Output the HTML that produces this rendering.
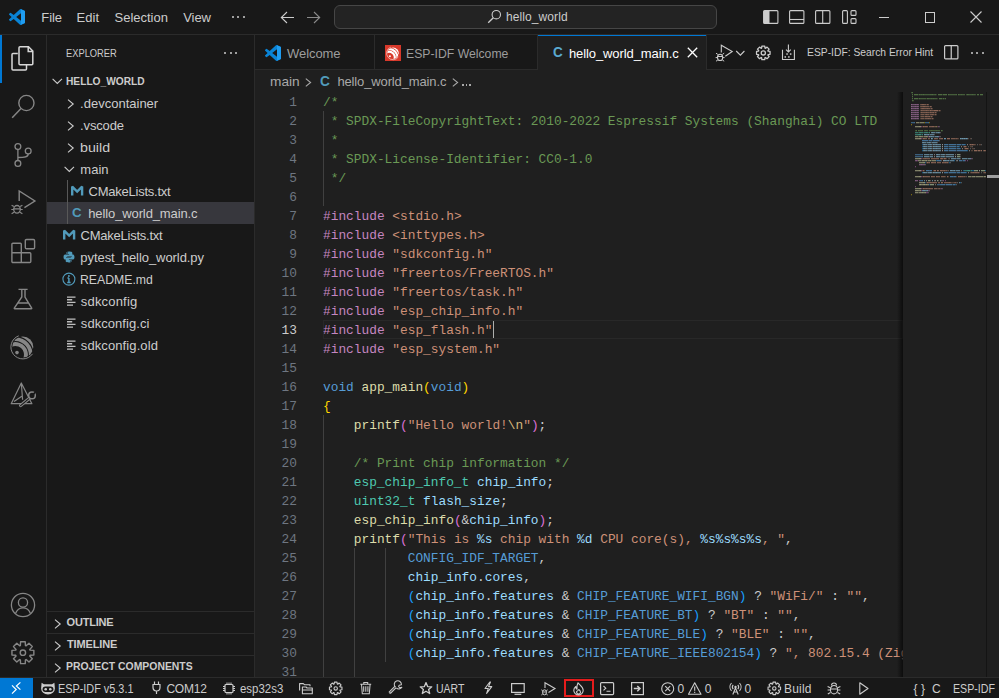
<!DOCTYPE html><html><head><meta charset="utf-8"><style>*{box-sizing:border-box;margin:0;padding:0}html,body{width:999px;height:698px;overflow:hidden;background:#181818;font-family:"Liberation Sans",sans-serif;color:#cccccc;position:relative}.a{position:absolute}.t{position:absolute;white-space:pre;line-height:1}svg{position:absolute;overflow:visible}.cl{position:absolute;left:0;height:19px;padding-top:1px;white-space:pre;font-family:"Liberation Mono",monospace;font-size:12.83px;line-height:19px;color:#cccccc}.ln{position:absolute;height:19px;width:60px;padding-top:1px;text-align:right;font-family:"Liberation Mono",monospace;font-size:12.83px;line-height:19px;color:#6e7681}</style></head><body><div class="a" style="left:0px;top:34px;width:999px;height:1px;background:#2b2b2b;"></div><svg style="left:9px;top:9px;" width="16" height="16" viewBox="0 0 100 100"><path fill="#0a84d6" d="M96.46 10.8L75.86.87a6.23 6.23 0 0 0-7.1 1.21L29.35 38.04 12.17 25.01a4.16 4.16 0 0 0-5.32.24L1.34 30.26a4.17 4.17 0 0 0 0 6.16L16.24 50 1.34 63.58a4.17 4.17 0 0 0 0 6.16l5.51 5.01a4.16 4.16 0 0 0 5.32.24l17.18-13.03 39.41 35.96a6.23 6.23 0 0 0 7.1 1.21l20.6-9.92A6.24 6.24 0 0 0 100 83.8V16.2a6.24 6.24 0 0 0-3.54-5.4zM75.02 72.7 45.11 50l29.91-22.7v45.4z"/><path fill="#1f9cf0" d="M75.86.87l20.6 9.93A6.24 6.24 0 0 1 100 16.2v67.6a6.24 6.24 0 0 1-3.54 5.4l-20.6 9.92A6.23 6.23 0 0 1 75 99.5V.5z"/></svg><div class="t" style="left:41.30px;top:11.30px;font-size:13px;color:#cccccc;font-weight:400;letter-spacing:-0.058px;">File</div><div class="t" style="left:76.50px;top:11.30px;font-size:13px;color:#cccccc;font-weight:400;letter-spacing:0.083px;">Edit</div><div class="t" style="left:114.58px;top:11.30px;font-size:13px;color:#cccccc;font-weight:400;letter-spacing:-0.025px;">Selection</div><div class="t" style="left:183.28px;top:11.30px;font-size:13px;color:#cccccc;font-weight:400;letter-spacing:-0.083px;">View</div><div class="a" style="left:231.6px;top:16px;width:2px;height:2px;background:#cccccc;border-radius:1px"></div><div class="a" style="left:237.1px;top:16px;width:2px;height:2px;background:#cccccc;border-radius:1px"></div><div class="a" style="left:242.6px;top:16px;width:2px;height:2px;background:#cccccc;border-radius:1px"></div><svg style="left:280px;top:11px;" width="15" height="13" viewBox="0 0 15 13"><path d="M7 1 L1.3 6.5 L7 12 M1.3 6.5 H14" stroke="#cccccc" stroke-width="1.1" fill="none"/></svg><svg style="left:306px;top:11px;" width="15" height="13" viewBox="0 0 15 13"><path d="M8 1 L13.7 6.5 L8 12 M13.7 6.5 H1" stroke="#8a8a8a" stroke-width="1.1" fill="none"/></svg><div class="a" style="left:334px;top:5px;width:383px;height:24px;border:1px solid #464646;border-radius:6px;background:#232323"></div><svg style="left:487px;top:9px;" width="15" height="15" viewBox="0 0 15 15"><circle cx="9.3" cy="5.7" r="4.2" stroke="#cccccc" stroke-width="1.1" fill="none"/><path d="M6.3 8.7 L1.2 13.8" stroke="#cccccc" stroke-width="1.3"/></svg><div class="t" style="left:506.12px;top:11.35px;font-size:12px;color:#cccccc;font-weight:400;letter-spacing:0.080px;">hello_world</div><svg style="left:763px;top:10px;" width="16" height="14" viewBox="0 0 16 14"><rect x="0.6" y="0.6" width="14.3" height="12.8" rx="1" stroke="#cccccc" stroke-width="1.1" fill="none"/><rect x="1" y="1" width="5.5" height="12" fill="#cccccc"/></svg><svg style="left:789px;top:10px;" width="16" height="14" viewBox="0 0 16 14"><rect x="0.6" y="0.6" width="14.3" height="12.8" rx="1" stroke="#cccccc" stroke-width="1.1" fill="none"/><path d="M1 9.5 H15" stroke="#cccccc" stroke-width="1.1"/></svg><svg style="left:815px;top:10px;" width="16" height="14" viewBox="0 0 16 14"><rect x="0.6" y="0.6" width="14.3" height="12.8" rx="1" stroke="#cccccc" stroke-width="1.1" fill="none"/><path d="M7.7 1 V13.5" stroke="#cccccc" stroke-width="1.1"/></svg><svg style="left:842px;top:10px;" width="15" height="14" viewBox="0 0 15 14"><rect x="0.6" y="0.6" width="4.8" height="12.8" rx="1" stroke="#cccccc" stroke-width="1.1" fill="none"/><rect x="9" y="0.6" width="5" height="4.8" rx="1" stroke="#cccccc" stroke-width="1.1" fill="none"/><rect x="9" y="8.6" width="5" height="4.8" rx="1" stroke="#cccccc" stroke-width="1.1" fill="none"/></svg><div class="a" style="left:879px;top:17px;width:10px;height:1px;background:#cccccc;"></div><div class="a" style="left:925px;top:12px;width:10px;height:11px;border:1px solid #cccccc"></div><svg style="left:970px;top:11px;" width="12" height="12" viewBox="0 0 12 12"><path d="M0.5 0.5 L11.5 11.5 M11.5 0.5 L0.5 11.5" stroke="#cccccc" stroke-width="1.1"/></svg><div class="a" style="left:46px;top:35px;width:1px;height:642px;background:#2b2b2b;"></div><div class="a" style="left:0px;top:35px;width:2px;height:48px;background:#0078d4;"></div><svg style="left:11px;top:46px;" width="23" height="25" viewBox="0 0 23 25"><path d="M6.8 7.5 H2 a1 1 0 0 0 -1 1 V23 a1 1 0 0 0 1 1 H14.5 a1 1 0 0 0 1 -1 V19" stroke="#d7d7d7" stroke-width="1.5" fill="none"/><path d="M8 1.8 a1 1 0 0 1 1 -1 H17.5 L21.8 5 V17.8 a1 1 0 0 1 -1 1 H9 a1 1 0 0 1 -1 -1 Z M17.2 1 V5.5 H21.8" stroke="#d7d7d7" stroke-width="1.5" fill="none"/></svg><svg style="left:11px;top:94px;" width="25" height="25" viewBox="0 0 25 25"><circle cx="15.4" cy="9" r="7.6" stroke="#868686" stroke-width="1.4" fill="none"/><path d="M10 14.5 L1.2 23.8" stroke="#868686" stroke-width="1.5"/></svg><svg style="left:11px;top:141px;" width="22" height="26" viewBox="0 0 22 26"><circle cx="6.9" cy="5.6" r="2.9" stroke="#868686" stroke-width="1.3" fill="none"/><circle cx="17.2" cy="10.1" r="2.9" stroke="#868686" stroke-width="1.3" fill="none"/><circle cx="6.9" cy="22.4" r="2.9" stroke="#868686" stroke-width="1.3" fill="none"/><path d="M6.9 8.5 V19.5 M17.2 13 C17.2 16 14 16.5 6.9 16.5" stroke="#868686" stroke-width="1.3" fill="none"/></svg><svg style="left:9px;top:189px;" width="28" height="26" viewBox="0 0 28 26"><path d="M10.2 12 V2 L25.9 12 L15.4 18.7" stroke="#868686" stroke-width="1.4" fill="none" stroke-linejoin="miter"/><ellipse cx="8" cy="20.3" rx="3.3" ry="3.8" stroke="#868686" stroke-width="1.3" fill="none"/><path d="M4.6 19.8 H11.4 M2.6 16.2 L4.9 17.6 M13.4 16.2 L11.1 17.6 M2.3 20.5 H4.6 M11.4 20.5 H13.7 M2.6 24.8 L5 23.3 M13.4 24.8 L11 23.3" stroke="#868686" stroke-width="1.2" fill="none"/></svg><svg style="left:10px;top:238px;" width="26" height="26" viewBox="0 0 26 26"><path d="M1.9 6.2 a1 1 0 0 1 1 -1 H10.3 a1 1 0 0 1 1 1 V14.7 H19.8 a1 1 0 0 1 1 1 V23.5 a1 1 0 0 1 -1 1 H2.9 a1 1 0 0 1 -1 -1 Z M1.9 14.7 H11.3 V24.5" stroke="#868686" stroke-width="1.4" fill="none"/><rect x="15.3" y="1.5" width="9.3" height="9.3" rx="1.2" stroke="#868686" stroke-width="1.4" fill="none"/></svg><svg style="left:10px;top:287px;" width="24" height="24" viewBox="0 0 24 24"><path d="M8.5 2.4 H17.6 M11.8 2.4 V10 L4.3 21.2 a0.4 0.4 0 0 0 0.4 0.6 H21.3 a0.4 0.4 0 0 0 0.4 -0.6 L15 10 V2.4 M7.7 16 H18.3" stroke="#868686" stroke-width="1.4" fill="none"/></svg><svg style="left:8px;top:332px" width="30" height="30" viewBox="0 0 30 30"><defs><clipPath id="clipA"><circle cx="14.8" cy="15" r="10.5"/></clipPath></defs><g clip-path="url(#clipA)"><path d="M-2.90 22.50 A10.4 10.4 0 1 1 15.47 29.18" stroke="#868686" stroke-width="3.9" fill="none"/><path d="M-6.78 17.30 A15.2 15.2 0 1 1 20.66 30.10" stroke="#868686" stroke-width="3.8" fill="none"/><path d="M-5.36 7.18 A20.0 20.0 0 0 1 26.29 29.34" stroke="#868686" stroke-width="3.4" fill="none"/></g><circle cx="9" cy="20.6" r="1.8" fill="#868686"/><path d="M24.55 21.83 A11.9 11.9 0 1 1 10.73 3.82" stroke="#868686" stroke-width="1" fill="none"/></svg><svg style="left:8px;top:378px;" width="30" height="32" viewBox="0 0 30 32"><path d="M13.3 5 L3.2 25.7 H23.9 Z M13.3 5 L14.6 21.8 M6 23.6 L13.8 18.2" stroke="#868686" stroke-width="1.2" fill="none" stroke-linejoin="round"/><path d="M12.6 27.6 L21.5 20.2" stroke="#868686" stroke-width="3.2" stroke-linecap="round"/><path d="M12.6 27.6 L21.5 20.2" stroke="#181818" stroke-width="1.1" stroke-linecap="round"/><circle cx="24" cy="17.4" r="3.3" stroke="#868686" stroke-width="1.5" fill="#181818"/><path d="M24.5 17 L27.5 14.2" stroke="#181818" stroke-width="1.8"/><path d="M21.5 20.2 L22 19.6" stroke="#868686" stroke-width="1.2"/></svg><svg style="left:10px;top:592px;" width="26" height="26" viewBox="0 0 26 26"><circle cx="13" cy="13" r="11.6" stroke="#868686" stroke-width="1.3" fill="none"/><circle cx="13" cy="10.5" r="4.6" stroke="#868686" stroke-width="1.3" fill="none"/><path d="M5.5 21.5 C7 17.5 9.5 15.8 13 15.8 C16.5 15.8 19 17.5 20.5 21.5" stroke="#868686" stroke-width="1.3" fill="none"/></svg><svg style="left:0;top:0" width="999" height="698" viewBox="0 0 999 698"><path d="M30.06 650.17 L33.85 650.37 L33.85 655.03 L30.06 655.23 L29.76 655.97 L32.30 658.79 L28.99 662.10 L26.17 659.56 L25.43 659.86 L25.23 663.65 L20.57 663.65 L20.37 659.86 L19.63 659.56 L16.81 662.10 L13.50 658.79 L16.04 655.97 L15.74 655.23 L11.95 655.03 L11.95 650.37 L15.74 650.17 L16.04 649.43 L13.50 646.61 L16.81 643.30 L19.63 645.84 L20.37 645.54 L20.57 641.75 L25.23 641.75 L25.43 645.54 L26.17 645.84 L28.99 643.30 L32.30 646.61 L29.76 649.43Z" stroke="#868686" stroke-width="1.4" fill="none" stroke-linejoin="round"/><circle cx="22.9" cy="652.7" r="2.7" stroke="#868686" stroke-width="1.4" fill="none"/></svg><div class="a" style="left:254px;top:35px;width:1px;height:642px;background:#2b2b2b;"></div><div class="t" style="left:66.26px;top:48.09px;font-size:11px;color:#cccccc;font-weight:400;transform:scaleX(0.8479);transform-origin:0 0;">EXPLORER</div><div class="a" style="left:224.4px;top:52px;width:2px;height:2px;background:#cccccc;border-radius:1px"></div><div class="a" style="left:229.7px;top:52px;width:2px;height:2px;background:#cccccc;border-radius:1px"></div><div class="a" style="left:235.0px;top:52px;width:2px;height:2px;background:#cccccc;border-radius:1px"></div><svg style="left:52px;top:78.4px;" width="11" height="7" viewBox="0 0 11 7"><path d="M0.6 0.8 L5.3 5.5 L10 0.8" stroke="#cccccc" stroke-width="1.1" fill="none"/></svg><div class="t" style="left:66.31px;top:75.89px;font-size:11px;color:#cccccc;font-weight:700;transform:scaleX(0.9266);transform-origin:0 0;">HELLO_WORLD</div><div class="t" style="left:80.08px;top:96.80px;font-size:13px;color:#cccccc;font-weight:400;letter-spacing:0.004px;">.devcontainer</div><svg style="left:66.6px;top:99.1px;" width="8" height="10" viewBox="0 0 8 10"><path d="M1 0.7 L6.2 5 L1 9.3" stroke="#cccccc" stroke-width="1.1" fill="none"/></svg><div class="t" style="left:80.08px;top:118.80px;font-size:13px;color:#cccccc;font-weight:400;letter-spacing:-0.154px;">.vscode</div><svg style="left:66.6px;top:121.1px;" width="8" height="10" viewBox="0 0 8 10"><path d="M1 0.7 L6.2 5 L1 9.3" stroke="#cccccc" stroke-width="1.1" fill="none"/></svg><div class="t" style="left:80.24px;top:140.80px;font-size:13px;color:#cccccc;font-weight:400;transform:scaleX(1.0951);transform-origin:0 0;">build</div><svg style="left:66.6px;top:143.1px;" width="8" height="10" viewBox="0 0 8 10"><path d="M1 0.7 L6.2 5 L1 9.3" stroke="#cccccc" stroke-width="1.1" fill="none"/></svg><div class="t" style="left:80.33px;top:162.80px;font-size:13px;color:#cccccc;font-weight:400;letter-spacing:0.000px;">main</div><svg style="left:64.4px;top:166.3px;" width="11" height="7" viewBox="0 0 11 7"><path d="M0.6 0.8 L5.3 5.5 L10 0.8" stroke="#cccccc" stroke-width="1.1" fill="none"/></svg><div class="t" style="left:88.47px;top:184.80px;font-size:13px;color:#cccccc;font-weight:400;letter-spacing:-0.231px;">CMakeLists.txt</div><svg style="left:70.8px;top:185.4px;" width="12.3" height="10.6" viewBox="0 0 12.3 10.6"><path d="M1.2 10.6 V1.6 L6.15 6.6 L11.1 1.6 V10.6" stroke="#519aba" stroke-width="2.4" fill="none" stroke-linejoin="miter" stroke-miterlimit="2"/></svg><div class="a" style="left:47px;top:202px;width:207px;height:22px;background:#37373d;"></div><div class="t" style="left:88.22px;top:206.80px;font-size:13px;color:#cccccc;font-weight:400;letter-spacing:-0.112px;">hello_world_main.c</div><div class="t" style="left:72.11px;top:205.76px;font-size:13.64px;color:#519aba;font-weight:700;transform:scaleX(0.978);transform-origin:0 0">C</div><div class="t" style="left:80.58px;top:228.80px;font-size:13px;color:#cccccc;font-weight:400;letter-spacing:-0.238px;">CMakeLists.txt</div><svg style="left:62.7px;top:229.4px;" width="12.3" height="10.6" viewBox="0 0 12.3 10.6"><path d="M1.2 10.6 V1.6 L6.15 6.6 L11.1 1.6 V10.6" stroke="#519aba" stroke-width="2.4" fill="none" stroke-linejoin="miter" stroke-miterlimit="2"/></svg><div class="t" style="left:80.33px;top:250.80px;font-size:13px;color:#cccccc;font-weight:400;letter-spacing:-0.066px;">pytest_hello_world.py</div><svg style="left:62.9px;top:251.2px;" width="12" height="12" viewBox="0 0 12 12"><path d="M6 0.5 C3.3 0.5 3.5 1.7 3.5 1.7 V3 H6.1 V3.5 H2.4 C2.4 3.5 0.5 3.3 0.5 6 C0.5 8.8 2.2 8.6 2.2 8.6 H3.2 V7.3 C3.2 7.3 3.1 5.6 4.9 5.6 H7.6 C7.6 5.6 9.3 5.7 9.3 4 V1.9 C9.3 1.9 9.6 0.5 6 0.5 Z" fill="#519aba"/><path d="M6 0.5 C3.3 0.5 3.5 1.7 3.5 1.7 V3 H6.1 V3.5 H2.4 C2.4 3.5 0.5 3.3 0.5 6 C0.5 8.8 2.2 8.6 2.2 8.6 H3.2 V7.3 C3.2 7.3 3.1 5.6 4.9 5.6 H7.6 C7.6 5.6 9.3 5.7 9.3 4 V1.9 C9.3 1.9 9.6 0.5 6 0.5 Z" fill="#519aba" transform="rotate(180 6 6)"/><circle cx="4.6" cy="1.9" r="0.55" fill="#181818"/><circle cx="7.4" cy="10.1" r="0.55" fill="#181818"/></svg><div class="t" style="left:80.26px;top:272.80px;font-size:13px;color:#cccccc;font-weight:400;transform:scaleX(0.9430);transform-origin:0 0;">README.md</div><svg style="left:62px;top:272.8px;" width="14" height="13" viewBox="0 0 14 13"><circle cx="6.9" cy="6.1" r="6" stroke="#519aba" stroke-width="1.1" fill="none"/><path d="M6.9 5 V9.4 M5.2 9.4 H8.6 M5.4 5 H7" stroke="#519aba" stroke-width="1.5"/><circle cx="6.9" cy="3.1" r="1" fill="#519aba"/></svg><div class="t" style="left:80.83px;top:294.80px;font-size:13px;color:#cccccc;font-weight:400;letter-spacing:0.181px;">sdkconfig</div><svg style="left:66px;top:296px;" width="11" height="11" viewBox="0 0 11 11"><path d="M1 1.1 H9.5 M1 3.75 H6.2 M1 6.45 H9.5 M1 9.15 H7" stroke="#c0c0c0" stroke-width="1.3"/></svg><div class="t" style="left:80.83px;top:316.80px;font-size:13px;color:#cccccc;font-weight:400;letter-spacing:0.052px;">sdkconfig.ci</div><svg style="left:66px;top:318px;" width="11" height="11" viewBox="0 0 11 11"><path d="M1 1.1 H9.5 M1 3.75 H6.2 M1 6.45 H9.5 M1 9.15 H7" stroke="#c0c0c0" stroke-width="1.3"/></svg><div class="t" style="left:80.83px;top:338.80px;font-size:13px;color:#cccccc;font-weight:400;letter-spacing:0.098px;">sdkconfig.old</div><svg style="left:66px;top:340px;" width="11" height="11" viewBox="0 0 11 11"><path d="M1 1.1 H9.5 M1 3.75 H6.2 M1 6.45 H9.5 M1 9.15 H7" stroke="#c0c0c0" stroke-width="1.3"/></svg><div class="a" style="left:67px;top:180px;width:1px;height:44px;background:#585858;"></div><div class="a" style="left:47px;top:611px;width:207px;height:1px;background:#2b2b2b;"></div><svg style="left:53.8px;top:618.6px;" width="8" height="10" viewBox="0 0 8 10"><path d="M1 0.7 L6.2 5 L1 9.3" stroke="#cccccc" stroke-width="1.1" fill="none"/></svg><div class="t" style="left:66.50px;top:616.89px;font-size:11px;color:#cccccc;font-weight:700;letter-spacing:-0.179px;">OUTLINE</div><div class="a" style="left:47px;top:633px;width:207px;height:1px;background:#2b2b2b;"></div><svg style="left:53.8px;top:640.6px;" width="8" height="10" viewBox="0 0 8 10"><path d="M1 0.7 L6.2 5 L1 9.3" stroke="#cccccc" stroke-width="1.1" fill="none"/></svg><div class="t" style="left:66.88px;top:638.89px;font-size:11px;color:#cccccc;font-weight:700;letter-spacing:-0.107px;">TIMELINE</div><div class="a" style="left:47px;top:655px;width:207px;height:1px;background:#2b2b2b;"></div><svg style="left:53.8px;top:662.6px;" width="8" height="10" viewBox="0 0 8 10"><path d="M1 0.7 L6.2 5 L1 9.3" stroke="#cccccc" stroke-width="1.1" fill="none"/></svg><div class="t" style="left:66.29px;top:660.89px;font-size:11px;color:#cccccc;font-weight:700;transform:scaleX(0.9463);transform-origin:0 0;">PROJECT COMPONENTS</div><div class="a" style="left:255px;top:70px;width:744px;height:607px;background:#1f1f1f;"></div><div class="a" style="left:255px;top:69px;width:744px;height:1px;background:#2b2b2b;"></div><div class="a" style="left:374px;top:35px;width:1px;height:34px;background:#2b2b2b;"></div><div class="a" style="left:537px;top:35px;width:1px;height:34px;background:#2b2b2b;"></div><div class="a" style="left:706px;top:35px;width:1px;height:34px;background:#2b2b2b;"></div><div class="a" style="left:538px;top:35px;width:168px;height:35px;background:#1f1f1f;"></div><div class="a" style="left:538px;top:35px;width:168px;height:1px;background:#0078d4;"></div><svg style="left:265px;top:45px;" width="16" height="16" viewBox="0 0 100 100"><path fill="#0a84d6" d="M96.46 10.8L75.86.87a6.23 6.23 0 0 0-7.1 1.21L29.35 38.04 12.17 25.01a4.16 4.16 0 0 0-5.32.24L1.34 30.26a4.17 4.17 0 0 0 0 6.16L16.24 50 1.34 63.58a4.17 4.17 0 0 0 0 6.16l5.51 5.01a4.16 4.16 0 0 0 5.32.24l17.18-13.03 39.41 35.96a6.23 6.23 0 0 0 7.1 1.21l20.6-9.92A6.24 6.24 0 0 0 100 83.8V16.2a6.24 6.24 0 0 0-3.54-5.4zM75.02 72.7 45.11 50l29.91-22.7v45.4z"/><path fill="#1f9cf0" d="M75.86.87l20.6 9.93A6.24 6.24 0 0 1 100 16.2v67.6a6.24 6.24 0 0 1-3.54 5.4l-20.6 9.92A6.23 6.23 0 0 1 75 99.5V.5z"/></svg><div class="t" style="left:287.00px;top:46.90px;font-size:13px;color:#9d9d9d;font-weight:400;letter-spacing:-0.062px;">Welcome</div><div class="a" style="left:385px;top:45px;width:16px;height:16px;background:#d8392b;"></div><svg style="left:384.7px;top:45.1px" width="16.4" height="16.4" viewBox="0 0 30 30"><defs><clipPath id="clipB"><circle cx="14.8" cy="15" r="10.5"/></clipPath></defs><g clip-path="url(#clipB)"><path d="M-2.90 22.50 A10.4 10.4 0 1 1 15.47 29.18" stroke="#ffffff" stroke-width="3.9" fill="none"/><path d="M-6.78 17.30 A15.2 15.2 0 1 1 20.66 30.10" stroke="#ffffff" stroke-width="3.8" fill="none"/><path d="M-5.36 7.18 A20.0 20.0 0 0 1 26.29 29.34" stroke="#ffffff" stroke-width="3.4" fill="none"/></g><circle cx="9" cy="20.6" r="1.8" fill="#ffffff"/><path d="M24.55 21.83 A11.9 11.9 0 1 1 10.73 3.82" stroke="#ffffff" stroke-width="1" fill="none"/></svg><div class="t" style="left:406.36px;top:46.90px;font-size:13px;color:#9d9d9d;font-weight:400;transform:scaleX(0.9408);transform-origin:0 0;">ESP-IDF Welcome</div><div class="t" style="left:552.63px;top:44.60px;font-size:14.78px;color:#5aaad0;font-weight:700;transform:scaleX(0.914);transform-origin:0 0">C</div><div class="t" style="left:568.92px;top:46.90px;font-size:13px;color:#ffffff;font-weight:400;letter-spacing:-0.088px;">hello_world_main.c</div><svg style="left:687px;top:47px;" width="11" height="11" viewBox="0 0 11 11"><path d="M0.8 0.8 L10.2 10.2 M10.2 0.8 L0.8 10.2" stroke="#ffffff" stroke-width="1.3"/></svg><svg style="left:710px;top:38px;" width="90" height="30" viewBox="710 38 90 30"><path d="M721.3 52.4 V45.2 L732.2 51.5 L725.3 56.3" stroke="#cccccc" stroke-width="1.1" fill="none"/><ellipse cx="720.1" cy="57.4" rx="2.6" ry="3.1" stroke="#cccccc" stroke-width="1.1" fill="none"/><path d="M717.5 56.5 H722.7 M716 53.2 L717.8 54.4 M724.2 53.2 L722.4 54.4 M715.6 57.6 H717.5 M722.7 57.6 H724.6 M716 61.2 L717.8 60 M724.2 61.2 L722.4 60" stroke="#cccccc" stroke-width="1" fill="none"/><path d="M736.2 51 L740.4 55.1 L744.4 51" stroke="#cccccc" stroke-width="1.1" fill="none"/><path d="M782.5 49.7 V59.5 H794.4 V49.7 M788.4 44.5 V51.8 M786 49.6 L788.4 52 L790.8 49.6" stroke="#cccccc" stroke-width="1.1" fill="none"/><g fill="#cccccc"><rect x="786.3" y="53.3" width="1.5" height="1.5"/><rect x="789.9" y="53.3" width="1.5" height="1.5"/><rect x="784.5" y="56.2" width="1.5" height="1.5"/><rect x="788.1" y="56.2" width="1.5" height="1.5"/></g></svg><svg style="left:0;top:0" width="999" height="698" viewBox="0 0 999 698"><path d="M768.11 51.20 L770.05 51.46 L770.05 54.34 L768.11 54.60 L767.90 55.10 L769.09 56.65 L767.05 58.69 L765.50 57.50 L765.00 57.71 L764.74 59.65 L761.86 59.65 L761.60 57.71 L761.10 57.50 L759.55 58.69 L757.51 56.65 L758.70 55.10 L758.49 54.60 L756.55 54.34 L756.55 51.46 L758.49 51.20 L758.70 50.70 L757.51 49.15 L759.55 47.11 L761.10 48.30 L761.60 48.09 L761.86 46.15 L764.74 46.15 L765.00 48.09 L765.50 48.30 L767.05 47.11 L769.09 49.15 L767.90 50.70Z" stroke="#cccccc" stroke-width="1.3" fill="none" stroke-linejoin="round"/><circle cx="763.3" cy="52.9" r="2.1" stroke="#cccccc" stroke-width="1.3" fill="none"/></svg><div class="t" style="left:806.92px;top:47.07px;font-size:11.5px;color:#cccccc;font-weight:400;transform:scaleX(0.8967);transform-origin:0 0;">ESP-IDF: Search Error Hint</div><svg style="left:944px;top:45px;" width="15" height="15" viewBox="0 0 15 15"><rect x="0.6" y="0.6" width="13.3" height="13.3" rx="1" stroke="#cccccc" stroke-width="1.2" fill="none"/><path d="M7.25 1 V14" stroke="#cccccc" stroke-width="1.2"/></svg><div class="a" style="left:971.0px;top:52px;width:2px;height:2px;background:#cccccc;border-radius:1px"></div><div class="a" style="left:976.3px;top:52px;width:2px;height:2px;background:#cccccc;border-radius:1px"></div><div class="a" style="left:981.6px;top:52px;width:2px;height:2px;background:#cccccc;border-radius:1px"></div><div class="t" style="left:270.28px;top:74.90px;font-size:13px;color:#a9a9a9;font-weight:400;transform:scaleX(1.0528);transform-origin:0 0;">main</div><svg style="left:304.5px;top:77.6px;" width="7" height="9" viewBox="0 0 7 9"><path d="M0.8 0.6 L5.6 4.5 L0.8 8.4" stroke="#a9a9a9" stroke-width="1.1" fill="none"/></svg><div class="t" style="left:320.29px;top:74.20px;font-size:14.07px;color:#519aba;font-weight:700;transform:scaleX(0.975);transform-origin:0 0">C</div><div class="t" style="left:337.43px;top:74.90px;font-size:13px;color:#a9a9a9;font-weight:400;letter-spacing:-0.135px;">hello_world_main.c</div><svg style="left:451.6px;top:77.6px;" width="7" height="9" viewBox="0 0 7 9"><path d="M0.8 0.6 L5.6 4.5 L0.8 8.4" stroke="#a9a9a9" stroke-width="1.1" fill="none"/></svg><div class="a" style="left:462.0px;top:84px;width:1.6px;height:1.6px;background:#a9a9a9;"></div><div class="a" style="left:465.5px;top:84px;width:1.6px;height:1.6px;background:#a9a9a9;"></div><div class="a" style="left:469.0px;top:84px;width:1.6px;height:1.6px;background:#a9a9a9;"></div><div class="a" style="left:323px;top:111px;width:1px;height:95px;background:#404040;"></div><div class="a" style="left:323px;top:415px;width:1px;height:262px;background:#404040;"></div><div class="a" style="left:354px;top:548px;width:1px;height:129px;background:#404040;"></div><div class="a" style="left:385px;top:548px;width:1px;height:114px;background:#404040;"></div><div class="a" style="left:323px;top:320px;width:580px;height:19px;background:transparent;border:1px solid #282828"></div><div class="a" style="left:323px;top:92px;width:580px;height:585px;overflow:hidden"><div class="cl" style="top:0px"><span style="color:#6a9955">/*</span></div><div class="cl" style="top:19px"><span style="color:#6a9955"> * SPDX-FileCopyrightText: 2010-2022 Espressif Systems (Shanghai) CO LTD</span></div><div class="cl" style="top:38px"><span style="color:#6a9955"> *</span></div><div class="cl" style="top:57px"><span style="color:#6a9955"> * SPDX-License-Identifier: CC0-1.0</span></div><div class="cl" style="top:76px"><span style="color:#6a9955"> */</span></div><div class="cl" style="top:95px"></div><div class="cl" style="top:114px"><span style="color:#c586c0">#include</span><span style="color:#cccccc"> </span><span style="color:#ce9178">&lt;stdio.h&gt;</span></div><div class="cl" style="top:133px"><span style="color:#c586c0">#include</span><span style="color:#cccccc"> </span><span style="color:#ce9178">&lt;inttypes.h&gt;</span></div><div class="cl" style="top:152px"><span style="color:#c586c0">#include</span><span style="color:#cccccc"> </span><span style="color:#ce9178">"sdkconfig.h"</span></div><div class="cl" style="top:171px"><span style="color:#c586c0">#include</span><span style="color:#cccccc"> </span><span style="color:#ce9178">"freertos/FreeRTOS.h"</span></div><div class="cl" style="top:190px"><span style="color:#c586c0">#include</span><span style="color:#cccccc"> </span><span style="color:#ce9178">"freertos/task.h"</span></div><div class="cl" style="top:209px"><span style="color:#c586c0">#include</span><span style="color:#cccccc"> </span><span style="color:#ce9178">"esp_chip_info.h"</span></div><div class="cl" style="top:228px"><span style="color:#c586c0">#include</span><span style="color:#cccccc"> </span><span style="color:#ce9178">"esp_flash.h"</span></div><div class="cl" style="top:247px"><span style="color:#c586c0">#include</span><span style="color:#cccccc"> </span><span style="color:#ce9178">"esp_system.h"</span></div><div class="cl" style="top:266px"></div><div class="cl" style="top:285px"><span style="color:#569cd6">void</span><span style="color:#cccccc"> </span><span style="color:#dcdcaa">app_main</span><span style="color:#ffd700">(</span><span style="color:#569cd6">void</span><span style="color:#ffd700">)</span></div><div class="cl" style="top:304px"><span style="color:#ffd700">{</span></div><div class="cl" style="top:323px"><span style="color:#cccccc">    </span><span style="color:#dcdcaa">printf</span><span style="color:#da70d6">(</span><span style="color:#ce9178">"Hello world!</span><span style="color:#d7ba7d">\n</span><span style="color:#ce9178">"</span><span style="color:#da70d6">)</span><span style="color:#cccccc">;</span></div><div class="cl" style="top:342px"></div><div class="cl" style="top:361px"><span style="color:#cccccc">    </span><span style="color:#6a9955">/* Print chip information */</span></div><div class="cl" style="top:380px"><span style="color:#cccccc">    </span><span style="color:#4ec9b0">esp_chip_info_t</span><span style="color:#cccccc"> </span><span style="color:#9cdcfe">chip_info</span><span style="color:#cccccc">;</span></div><div class="cl" style="top:399px"><span style="color:#cccccc">    </span><span style="color:#4ec9b0">uint32_t</span><span style="color:#cccccc"> </span><span style="color:#9cdcfe">flash_size</span><span style="color:#cccccc">;</span></div><div class="cl" style="top:418px"><span style="color:#cccccc">    </span><span style="color:#dcdcaa">esp_chip_info</span><span style="color:#da70d6">(</span><span style="color:#cccccc">&amp;</span><span style="color:#9cdcfe">chip_info</span><span style="color:#da70d6">)</span><span style="color:#cccccc">;</span></div><div class="cl" style="top:437px"><span style="color:#cccccc">    </span><span style="color:#dcdcaa">printf</span><span style="color:#da70d6">(</span><span style="color:#ce9178">"This is </span><span style="color:#9cdcfe">%s</span><span style="color:#ce9178"> chip with </span><span style="color:#9cdcfe">%d</span><span style="color:#ce9178"> CPU core(s), </span><span style="color:#9cdcfe">%s%s%s%s</span><span style="color:#ce9178">, "</span><span style="color:#cccccc">,</span></div><div class="cl" style="top:456px"><span style="color:#cccccc">           </span><span style="color:#569cd6">CONFIG_IDF_TARGET</span><span style="color:#cccccc">,</span></div><div class="cl" style="top:475px"><span style="color:#cccccc">           </span><span style="color:#9cdcfe">chip_info</span><span style="color:#cccccc">.</span><span style="color:#9cdcfe">cores</span><span style="color:#cccccc">,</span></div><div class="cl" style="top:494px"><span style="color:#cccccc">           </span><span style="color:#179fff">(</span><span style="color:#9cdcfe">chip_info</span><span style="color:#cccccc">.</span><span style="color:#9cdcfe">features</span><span style="color:#cccccc"> &amp; </span><span style="color:#569cd6">CHIP_FEATURE_WIFI_BGN</span><span style="color:#179fff">)</span><span style="color:#cccccc"> ? </span><span style="color:#ce9178">"WiFi/"</span><span style="color:#cccccc"> : </span><span style="color:#ce9178">""</span><span style="color:#cccccc">,</span></div><div class="cl" style="top:513px"><span style="color:#cccccc">           </span><span style="color:#179fff">(</span><span style="color:#9cdcfe">chip_info</span><span style="color:#cccccc">.</span><span style="color:#9cdcfe">features</span><span style="color:#cccccc"> &amp; </span><span style="color:#569cd6">CHIP_FEATURE_BT</span><span style="color:#179fff">)</span><span style="color:#cccccc"> ? </span><span style="color:#ce9178">"BT"</span><span style="color:#cccccc"> : </span><span style="color:#ce9178">""</span><span style="color:#cccccc">,</span></div><div class="cl" style="top:532px"><span style="color:#cccccc">           </span><span style="color:#179fff">(</span><span style="color:#9cdcfe">chip_info</span><span style="color:#cccccc">.</span><span style="color:#9cdcfe">features</span><span style="color:#cccccc"> &amp; </span><span style="color:#569cd6">CHIP_FEATURE_BLE</span><span style="color:#179fff">)</span><span style="color:#cccccc"> ? </span><span style="color:#ce9178">"BLE"</span><span style="color:#cccccc"> : </span><span style="color:#ce9178">""</span><span style="color:#cccccc">,</span></div><div class="cl" style="top:551px"><span style="color:#cccccc">           </span><span style="color:#179fff">(</span><span style="color:#9cdcfe">chip_info</span><span style="color:#cccccc">.</span><span style="color:#9cdcfe">features</span><span style="color:#cccccc"> &amp; </span><span style="color:#569cd6">CHIP_FEATURE_IEEE802154</span><span style="color:#179fff">)</span><span style="color:#cccccc"> ? </span><span style="color:#ce9178">", 802.15.4 (Zigbee/Thread)"</span><span style="color:#cccccc"> : </span><span style="color:#ce9178">""</span><span style="color:#da70d6">)</span><span style="color:#cccccc">;</span></div><div class="cl" style="top:570px"></div></div><div class="a" style="left:492.9px;top:321px;width:1.5px;height:17px;background:#aeafad;"></div><div class="ln" style="left:237px;top:92px;color:#6e7681">1</div><div class="ln" style="left:237px;top:111px;color:#6e7681">2</div><div class="ln" style="left:237px;top:130px;color:#6e7681">3</div><div class="ln" style="left:237px;top:149px;color:#6e7681">4</div><div class="ln" style="left:237px;top:168px;color:#6e7681">5</div><div class="ln" style="left:237px;top:187px;color:#6e7681">6</div><div class="ln" style="left:237px;top:206px;color:#6e7681">7</div><div class="ln" style="left:237px;top:225px;color:#6e7681">8</div><div class="ln" style="left:237px;top:244px;color:#6e7681">9</div><div class="ln" style="left:237px;top:263px;color:#6e7681">10</div><div class="ln" style="left:237px;top:282px;color:#6e7681">11</div><div class="ln" style="left:237px;top:301px;color:#6e7681">12</div><div class="ln" style="left:237px;top:320px;color:#cccccc">13</div><div class="ln" style="left:237px;top:339px;color:#6e7681">14</div><div class="ln" style="left:237px;top:358px;color:#6e7681">15</div><div class="ln" style="left:237px;top:377px;color:#6e7681">16</div><div class="ln" style="left:237px;top:396px;color:#6e7681">17</div><div class="ln" style="left:237px;top:415px;color:#6e7681">18</div><div class="ln" style="left:237px;top:434px;color:#6e7681">19</div><div class="ln" style="left:237px;top:453px;color:#6e7681">20</div><div class="ln" style="left:237px;top:472px;color:#6e7681">21</div><div class="ln" style="left:237px;top:491px;color:#6e7681">22</div><div class="ln" style="left:237px;top:510px;color:#6e7681">23</div><div class="ln" style="left:237px;top:529px;color:#6e7681">24</div><div class="ln" style="left:237px;top:548px;color:#6e7681">25</div><div class="ln" style="left:237px;top:567px;color:#6e7681">26</div><div class="ln" style="left:237px;top:586px;color:#6e7681">27</div><div class="ln" style="left:237px;top:605px;color:#6e7681">28</div><div class="ln" style="left:237px;top:624px;color:#6e7681">29</div><div class="ln" style="left:237px;top:643px;color:#6e7681">30</div><div class="ln" style="left:237px;top:662px;color:#6e7681">31</div><div class="a" style="left:897px;top:92px;width:6px;height:585px;background:linear-gradient(to right,rgba(0,0,0,0),rgba(0,0,0,0.6))"></div><svg style="left:0;top:0" width="999" height="698" viewBox="0 0 999 698"><rect x="911" y="92" width="1" height="1.3" fill="#6a9955" fill-opacity="0.42"/><rect x="912" y="92" width="1" height="1.3" fill="#6a9955" fill-opacity="0.64"/><rect x="912" y="94" width="1" height="1.3" fill="#6a9955" fill-opacity="0.64"/><rect x="914" y="94" width="1" height="1.3" fill="#6a9955" fill-opacity="0.64"/><rect x="915" y="94" width="1" height="1.3" fill="#6a9955" fill-opacity="0.64"/><rect x="916" y="94" width="1" height="1.3" fill="#6a9955" fill-opacity="0.64"/><rect x="917" y="94" width="1" height="1.3" fill="#6a9955" fill-opacity="0.64"/><rect x="918" y="94" width="1" height="1.3" fill="#6a9955" fill-opacity="0.30"/><rect x="919" y="94" width="1" height="1.3" fill="#6a9955" fill-opacity="0.64"/><rect x="920" y="94" width="1" height="1.3" fill="#6a9955" fill-opacity="0.51"/><rect x="921" y="94" width="1" height="1.3" fill="#6a9955" fill-opacity="0.59"/><rect x="922" y="94" width="1" height="1.3" fill="#6a9955" fill-opacity="0.51"/><rect x="923" y="94" width="1" height="1.3" fill="#6a9955" fill-opacity="0.64"/><rect x="924" y="94" width="1" height="1.3" fill="#6a9955" fill-opacity="0.51"/><rect x="925" y="94" width="1" height="1.3" fill="#6a9955" fill-opacity="0.51"/><rect x="926" y="94" width="1" height="1.3" fill="#6a9955" fill-opacity="0.51"/><rect x="927" y="94" width="1" height="1.3" fill="#6a9955" fill-opacity="0.51"/><rect x="928" y="94" width="1" height="1.3" fill="#6a9955" fill-opacity="0.51"/><rect x="929" y="94" width="1" height="1.3" fill="#6a9955" fill-opacity="0.51"/><rect x="930" y="94" width="1" height="1.3" fill="#6a9955" fill-opacity="0.59"/><rect x="931" y="94" width="1" height="1.3" fill="#6a9955" fill-opacity="0.59"/><rect x="932" y="94" width="1" height="1.3" fill="#6a9955" fill-opacity="0.64"/><rect x="933" y="94" width="1" height="1.3" fill="#6a9955" fill-opacity="0.51"/><rect x="934" y="94" width="1" height="1.3" fill="#6a9955" fill-opacity="0.51"/><rect x="935" y="94" width="1" height="1.3" fill="#6a9955" fill-opacity="0.59"/><rect x="936" y="94" width="1" height="1.3" fill="#6a9955" fill-opacity="0.30"/><rect x="938" y="94" width="1" height="1.3" fill="#6a9955" fill-opacity="0.64"/><rect x="939" y="94" width="1" height="1.3" fill="#6a9955" fill-opacity="0.64"/><rect x="940" y="94" width="1" height="1.3" fill="#6a9955" fill-opacity="0.64"/><rect x="941" y="94" width="1" height="1.3" fill="#6a9955" fill-opacity="0.64"/><rect x="942" y="94" width="1" height="1.3" fill="#6a9955" fill-opacity="0.30"/><rect x="943" y="94" width="1" height="1.3" fill="#6a9955" fill-opacity="0.64"/><rect x="944" y="94" width="1" height="1.3" fill="#6a9955" fill-opacity="0.64"/><rect x="945" y="94" width="1" height="1.3" fill="#6a9955" fill-opacity="0.64"/><rect x="946" y="94" width="1" height="1.3" fill="#6a9955" fill-opacity="0.64"/><rect x="948" y="94" width="1" height="1.3" fill="#6a9955" fill-opacity="0.64"/><rect x="949" y="94" width="1" height="1.3" fill="#6a9955" fill-opacity="0.51"/><rect x="950" y="94" width="1" height="1.3" fill="#6a9955" fill-opacity="0.51"/><rect x="951" y="94" width="1" height="1.3" fill="#6a9955" fill-opacity="0.51"/><rect x="952" y="94" width="1" height="1.3" fill="#6a9955" fill-opacity="0.51"/><rect x="953" y="94" width="1" height="1.3" fill="#6a9955" fill-opacity="0.51"/><rect x="954" y="94" width="1" height="1.3" fill="#6a9955" fill-opacity="0.51"/><rect x="955" y="94" width="1" height="1.3" fill="#6a9955" fill-opacity="0.51"/><rect x="956" y="94" width="1" height="1.3" fill="#6a9955" fill-opacity="0.59"/><rect x="958" y="94" width="1" height="1.3" fill="#6a9955" fill-opacity="0.64"/><rect x="959" y="94" width="1" height="1.3" fill="#6a9955" fill-opacity="0.51"/><rect x="960" y="94" width="1" height="1.3" fill="#6a9955" fill-opacity="0.51"/><rect x="961" y="94" width="1" height="1.3" fill="#6a9955" fill-opacity="0.59"/><rect x="962" y="94" width="1" height="1.3" fill="#6a9955" fill-opacity="0.51"/><rect x="963" y="94" width="1" height="1.3" fill="#6a9955" fill-opacity="0.51"/><rect x="964" y="94" width="1" height="1.3" fill="#6a9955" fill-opacity="0.51"/><rect x="966" y="94" width="1" height="1.3" fill="#6a9955" fill-opacity="0.42"/><rect x="967" y="94" width="1" height="1.3" fill="#6a9955" fill-opacity="0.64"/><rect x="968" y="94" width="1" height="1.3" fill="#6a9955" fill-opacity="0.59"/><rect x="969" y="94" width="1" height="1.3" fill="#6a9955" fill-opacity="0.51"/><rect x="970" y="94" width="1" height="1.3" fill="#6a9955" fill-opacity="0.51"/><rect x="971" y="94" width="1" height="1.3" fill="#6a9955" fill-opacity="0.51"/><rect x="972" y="94" width="1" height="1.3" fill="#6a9955" fill-opacity="0.59"/><rect x="973" y="94" width="1" height="1.3" fill="#6a9955" fill-opacity="0.51"/><rect x="974" y="94" width="1" height="1.3" fill="#6a9955" fill-opacity="0.51"/><rect x="975" y="94" width="1" height="1.3" fill="#6a9955" fill-opacity="0.42"/><rect x="977" y="94" width="1" height="1.3" fill="#6a9955" fill-opacity="0.64"/><rect x="978" y="94" width="1" height="1.3" fill="#6a9955" fill-opacity="0.64"/><rect x="980" y="94" width="1" height="1.3" fill="#6a9955" fill-opacity="0.64"/><rect x="981" y="94" width="1" height="1.3" fill="#6a9955" fill-opacity="0.64"/><rect x="982" y="94" width="1" height="1.3" fill="#6a9955" fill-opacity="0.64"/><rect x="912" y="96" width="1" height="1.3" fill="#6a9955" fill-opacity="0.64"/><rect x="912" y="98" width="1" height="1.3" fill="#6a9955" fill-opacity="0.64"/><rect x="914" y="98" width="1" height="1.3" fill="#6a9955" fill-opacity="0.64"/><rect x="915" y="98" width="1" height="1.3" fill="#6a9955" fill-opacity="0.64"/><rect x="916" y="98" width="1" height="1.3" fill="#6a9955" fill-opacity="0.64"/><rect x="917" y="98" width="1" height="1.3" fill="#6a9955" fill-opacity="0.64"/><rect x="918" y="98" width="1" height="1.3" fill="#6a9955" fill-opacity="0.30"/><rect x="919" y="98" width="1" height="1.3" fill="#6a9955" fill-opacity="0.64"/><rect x="920" y="98" width="1" height="1.3" fill="#6a9955" fill-opacity="0.51"/><rect x="921" y="98" width="1" height="1.3" fill="#6a9955" fill-opacity="0.51"/><rect x="922" y="98" width="1" height="1.3" fill="#6a9955" fill-opacity="0.51"/><rect x="923" y="98" width="1" height="1.3" fill="#6a9955" fill-opacity="0.51"/><rect x="924" y="98" width="1" height="1.3" fill="#6a9955" fill-opacity="0.51"/><rect x="925" y="98" width="1" height="1.3" fill="#6a9955" fill-opacity="0.51"/><rect x="926" y="98" width="1" height="1.3" fill="#6a9955" fill-opacity="0.30"/><rect x="927" y="98" width="1" height="1.3" fill="#6a9955" fill-opacity="0.64"/><rect x="928" y="98" width="1" height="1.3" fill="#6a9955" fill-opacity="0.59"/><rect x="929" y="98" width="1" height="1.3" fill="#6a9955" fill-opacity="0.51"/><rect x="930" y="98" width="1" height="1.3" fill="#6a9955" fill-opacity="0.51"/><rect x="931" y="98" width="1" height="1.3" fill="#6a9955" fill-opacity="0.59"/><rect x="932" y="98" width="1" height="1.3" fill="#6a9955" fill-opacity="0.51"/><rect x="933" y="98" width="1" height="1.3" fill="#6a9955" fill-opacity="0.59"/><rect x="934" y="98" width="1" height="1.3" fill="#6a9955" fill-opacity="0.51"/><rect x="935" y="98" width="1" height="1.3" fill="#6a9955" fill-opacity="0.51"/><rect x="936" y="98" width="1" height="1.3" fill="#6a9955" fill-opacity="0.51"/><rect x="937" y="98" width="1" height="1.3" fill="#6a9955" fill-opacity="0.30"/><rect x="939" y="98" width="1" height="1.3" fill="#6a9955" fill-opacity="0.64"/><rect x="940" y="98" width="1" height="1.3" fill="#6a9955" fill-opacity="0.64"/><rect x="941" y="98" width="1" height="1.3" fill="#6a9955" fill-opacity="0.64"/><rect x="942" y="98" width="1" height="1.3" fill="#6a9955" fill-opacity="0.30"/><rect x="943" y="98" width="1" height="1.3" fill="#6a9955" fill-opacity="0.64"/><rect x="944" y="98" width="1" height="1.3" fill="#6a9955" fill-opacity="0.30"/><rect x="945" y="98" width="1" height="1.3" fill="#6a9955" fill-opacity="0.64"/><rect x="912" y="100" width="1" height="1.3" fill="#6a9955" fill-opacity="0.64"/><rect x="913" y="100" width="1" height="1.3" fill="#6a9955" fill-opacity="0.42"/><rect x="911" y="104" width="1" height="1.3" fill="#c586c0" fill-opacity="0.64"/><rect x="912" y="104" width="1" height="1.3" fill="#c586c0" fill-opacity="0.51"/><rect x="913" y="104" width="1" height="1.3" fill="#c586c0" fill-opacity="0.51"/><rect x="914" y="104" width="1" height="1.3" fill="#c586c0" fill-opacity="0.51"/><rect x="915" y="104" width="1" height="1.3" fill="#c586c0" fill-opacity="0.59"/><rect x="916" y="104" width="1" height="1.3" fill="#c586c0" fill-opacity="0.51"/><rect x="917" y="104" width="1" height="1.3" fill="#c586c0" fill-opacity="0.59"/><rect x="918" y="104" width="1" height="1.3" fill="#c586c0" fill-opacity="0.51"/><rect x="920" y="104" width="1" height="1.3" fill="#ce9178" fill-opacity="0.42"/><rect x="921" y="104" width="1" height="1.3" fill="#ce9178" fill-opacity="0.51"/><rect x="922" y="104" width="1" height="1.3" fill="#ce9178" fill-opacity="0.59"/><rect x="923" y="104" width="1" height="1.3" fill="#ce9178" fill-opacity="0.59"/><rect x="924" y="104" width="1" height="1.3" fill="#ce9178" fill-opacity="0.51"/><rect x="925" y="104" width="1" height="1.3" fill="#ce9178" fill-opacity="0.51"/><rect x="926" y="104" width="1" height="1.3" fill="#ce9178" fill-opacity="0.30"/><rect x="927" y="104" width="1" height="1.3" fill="#ce9178" fill-opacity="0.59"/><rect x="928" y="104" width="1" height="1.3" fill="#ce9178" fill-opacity="0.42"/><rect x="911" y="106" width="1" height="1.3" fill="#c586c0" fill-opacity="0.64"/><rect x="912" y="106" width="1" height="1.3" fill="#c586c0" fill-opacity="0.51"/><rect x="913" y="106" width="1" height="1.3" fill="#c586c0" fill-opacity="0.51"/><rect x="914" y="106" width="1" height="1.3" fill="#c586c0" fill-opacity="0.51"/><rect x="915" y="106" width="1" height="1.3" fill="#c586c0" fill-opacity="0.59"/><rect x="916" y="106" width="1" height="1.3" fill="#c586c0" fill-opacity="0.51"/><rect x="917" y="106" width="1" height="1.3" fill="#c586c0" fill-opacity="0.59"/><rect x="918" y="106" width="1" height="1.3" fill="#c586c0" fill-opacity="0.51"/><rect x="920" y="106" width="1" height="1.3" fill="#ce9178" fill-opacity="0.42"/><rect x="921" y="106" width="1" height="1.3" fill="#ce9178" fill-opacity="0.51"/><rect x="922" y="106" width="1" height="1.3" fill="#ce9178" fill-opacity="0.51"/><rect x="923" y="106" width="1" height="1.3" fill="#ce9178" fill-opacity="0.59"/><rect x="924" y="106" width="1" height="1.3" fill="#ce9178" fill-opacity="0.59"/><rect x="925" y="106" width="1" height="1.3" fill="#ce9178" fill-opacity="0.51"/><rect x="926" y="106" width="1" height="1.3" fill="#ce9178" fill-opacity="0.51"/><rect x="927" y="106" width="1" height="1.3" fill="#ce9178" fill-opacity="0.51"/><rect x="928" y="106" width="1" height="1.3" fill="#ce9178" fill-opacity="0.51"/><rect x="929" y="106" width="1" height="1.3" fill="#ce9178" fill-opacity="0.30"/><rect x="930" y="106" width="1" height="1.3" fill="#ce9178" fill-opacity="0.59"/><rect x="931" y="106" width="1" height="1.3" fill="#ce9178" fill-opacity="0.42"/><rect x="911" y="108" width="1" height="1.3" fill="#c586c0" fill-opacity="0.64"/><rect x="912" y="108" width="1" height="1.3" fill="#c586c0" fill-opacity="0.51"/><rect x="913" y="108" width="1" height="1.3" fill="#c586c0" fill-opacity="0.51"/><rect x="914" y="108" width="1" height="1.3" fill="#c586c0" fill-opacity="0.51"/><rect x="915" y="108" width="1" height="1.3" fill="#c586c0" fill-opacity="0.59"/><rect x="916" y="108" width="1" height="1.3" fill="#c586c0" fill-opacity="0.51"/><rect x="917" y="108" width="1" height="1.3" fill="#c586c0" fill-opacity="0.59"/><rect x="918" y="108" width="1" height="1.3" fill="#c586c0" fill-opacity="0.51"/><rect x="920" y="108" width="1" height="1.3" fill="#ce9178" fill-opacity="0.30"/><rect x="921" y="108" width="1" height="1.3" fill="#ce9178" fill-opacity="0.51"/><rect x="922" y="108" width="1" height="1.3" fill="#ce9178" fill-opacity="0.59"/><rect x="923" y="108" width="1" height="1.3" fill="#ce9178" fill-opacity="0.59"/><rect x="924" y="108" width="1" height="1.3" fill="#ce9178" fill-opacity="0.51"/><rect x="925" y="108" width="1" height="1.3" fill="#ce9178" fill-opacity="0.51"/><rect x="926" y="108" width="1" height="1.3" fill="#ce9178" fill-opacity="0.51"/><rect x="927" y="108" width="1" height="1.3" fill="#ce9178" fill-opacity="0.59"/><rect x="928" y="108" width="1" height="1.3" fill="#ce9178" fill-opacity="0.51"/><rect x="929" y="108" width="1" height="1.3" fill="#ce9178" fill-opacity="0.51"/><rect x="930" y="108" width="1" height="1.3" fill="#ce9178" fill-opacity="0.30"/><rect x="931" y="108" width="1" height="1.3" fill="#ce9178" fill-opacity="0.59"/><rect x="932" y="108" width="1" height="1.3" fill="#ce9178" fill-opacity="0.30"/><rect x="911" y="110" width="1" height="1.3" fill="#c586c0" fill-opacity="0.64"/><rect x="912" y="110" width="1" height="1.3" fill="#c586c0" fill-opacity="0.51"/><rect x="913" y="110" width="1" height="1.3" fill="#c586c0" fill-opacity="0.51"/><rect x="914" y="110" width="1" height="1.3" fill="#c586c0" fill-opacity="0.51"/><rect x="915" y="110" width="1" height="1.3" fill="#c586c0" fill-opacity="0.59"/><rect x="916" y="110" width="1" height="1.3" fill="#c586c0" fill-opacity="0.51"/><rect x="917" y="110" width="1" height="1.3" fill="#c586c0" fill-opacity="0.59"/><rect x="918" y="110" width="1" height="1.3" fill="#c586c0" fill-opacity="0.51"/><rect x="920" y="110" width="1" height="1.3" fill="#ce9178" fill-opacity="0.30"/><rect x="921" y="110" width="1" height="1.3" fill="#ce9178" fill-opacity="0.59"/><rect x="922" y="110" width="1" height="1.3" fill="#ce9178" fill-opacity="0.51"/><rect x="923" y="110" width="1" height="1.3" fill="#ce9178" fill-opacity="0.51"/><rect x="924" y="110" width="1" height="1.3" fill="#ce9178" fill-opacity="0.51"/><rect x="925" y="110" width="1" height="1.3" fill="#ce9178" fill-opacity="0.51"/><rect x="926" y="110" width="1" height="1.3" fill="#ce9178" fill-opacity="0.59"/><rect x="927" y="110" width="1" height="1.3" fill="#ce9178" fill-opacity="0.51"/><rect x="928" y="110" width="1" height="1.3" fill="#ce9178" fill-opacity="0.51"/><rect x="929" y="110" width="1" height="1.3" fill="#ce9178" fill-opacity="0.42"/><rect x="930" y="110" width="1" height="1.3" fill="#ce9178" fill-opacity="0.64"/><rect x="931" y="110" width="1" height="1.3" fill="#ce9178" fill-opacity="0.51"/><rect x="932" y="110" width="1" height="1.3" fill="#ce9178" fill-opacity="0.51"/><rect x="933" y="110" width="1" height="1.3" fill="#ce9178" fill-opacity="0.51"/><rect x="934" y="110" width="1" height="1.3" fill="#ce9178" fill-opacity="0.64"/><rect x="935" y="110" width="1" height="1.3" fill="#ce9178" fill-opacity="0.64"/><rect x="936" y="110" width="1" height="1.3" fill="#ce9178" fill-opacity="0.64"/><rect x="937" y="110" width="1" height="1.3" fill="#ce9178" fill-opacity="0.64"/><rect x="938" y="110" width="1" height="1.3" fill="#ce9178" fill-opacity="0.30"/><rect x="939" y="110" width="1" height="1.3" fill="#ce9178" fill-opacity="0.59"/><rect x="940" y="110" width="1" height="1.3" fill="#ce9178" fill-opacity="0.30"/><rect x="911" y="112" width="1" height="1.3" fill="#c586c0" fill-opacity="0.64"/><rect x="912" y="112" width="1" height="1.3" fill="#c586c0" fill-opacity="0.51"/><rect x="913" y="112" width="1" height="1.3" fill="#c586c0" fill-opacity="0.51"/><rect x="914" y="112" width="1" height="1.3" fill="#c586c0" fill-opacity="0.51"/><rect x="915" y="112" width="1" height="1.3" fill="#c586c0" fill-opacity="0.59"/><rect x="916" y="112" width="1" height="1.3" fill="#c586c0" fill-opacity="0.51"/><rect x="917" y="112" width="1" height="1.3" fill="#c586c0" fill-opacity="0.59"/><rect x="918" y="112" width="1" height="1.3" fill="#c586c0" fill-opacity="0.51"/><rect x="920" y="112" width="1" height="1.3" fill="#ce9178" fill-opacity="0.30"/><rect x="921" y="112" width="1" height="1.3" fill="#ce9178" fill-opacity="0.59"/><rect x="922" y="112" width="1" height="1.3" fill="#ce9178" fill-opacity="0.51"/><rect x="923" y="112" width="1" height="1.3" fill="#ce9178" fill-opacity="0.51"/><rect x="924" y="112" width="1" height="1.3" fill="#ce9178" fill-opacity="0.51"/><rect x="925" y="112" width="1" height="1.3" fill="#ce9178" fill-opacity="0.51"/><rect x="926" y="112" width="1" height="1.3" fill="#ce9178" fill-opacity="0.59"/><rect x="927" y="112" width="1" height="1.3" fill="#ce9178" fill-opacity="0.51"/><rect x="928" y="112" width="1" height="1.3" fill="#ce9178" fill-opacity="0.51"/><rect x="929" y="112" width="1" height="1.3" fill="#ce9178" fill-opacity="0.42"/><rect x="930" y="112" width="1" height="1.3" fill="#ce9178" fill-opacity="0.59"/><rect x="931" y="112" width="1" height="1.3" fill="#ce9178" fill-opacity="0.51"/><rect x="932" y="112" width="1" height="1.3" fill="#ce9178" fill-opacity="0.51"/><rect x="933" y="112" width="1" height="1.3" fill="#ce9178" fill-opacity="0.59"/><rect x="934" y="112" width="1" height="1.3" fill="#ce9178" fill-opacity="0.30"/><rect x="935" y="112" width="1" height="1.3" fill="#ce9178" fill-opacity="0.59"/><rect x="936" y="112" width="1" height="1.3" fill="#ce9178" fill-opacity="0.30"/><rect x="911" y="114" width="1" height="1.3" fill="#c586c0" fill-opacity="0.64"/><rect x="912" y="114" width="1" height="1.3" fill="#c586c0" fill-opacity="0.51"/><rect x="913" y="114" width="1" height="1.3" fill="#c586c0" fill-opacity="0.51"/><rect x="914" y="114" width="1" height="1.3" fill="#c586c0" fill-opacity="0.51"/><rect x="915" y="114" width="1" height="1.3" fill="#c586c0" fill-opacity="0.59"/><rect x="916" y="114" width="1" height="1.3" fill="#c586c0" fill-opacity="0.51"/><rect x="917" y="114" width="1" height="1.3" fill="#c586c0" fill-opacity="0.59"/><rect x="918" y="114" width="1" height="1.3" fill="#c586c0" fill-opacity="0.51"/><rect x="920" y="114" width="1" height="1.3" fill="#ce9178" fill-opacity="0.30"/><rect x="921" y="114" width="1" height="1.3" fill="#ce9178" fill-opacity="0.51"/><rect x="922" y="114" width="1" height="1.3" fill="#ce9178" fill-opacity="0.51"/><rect x="923" y="114" width="1" height="1.3" fill="#ce9178" fill-opacity="0.51"/><rect x="924" y="114" width="1" height="1.3" fill="#ce9178" fill-opacity="0.30"/><rect x="925" y="114" width="1" height="1.3" fill="#ce9178" fill-opacity="0.51"/><rect x="926" y="114" width="1" height="1.3" fill="#ce9178" fill-opacity="0.59"/><rect x="927" y="114" width="1" height="1.3" fill="#ce9178" fill-opacity="0.51"/><rect x="928" y="114" width="1" height="1.3" fill="#ce9178" fill-opacity="0.51"/><rect x="929" y="114" width="1" height="1.3" fill="#ce9178" fill-opacity="0.30"/><rect x="930" y="114" width="1" height="1.3" fill="#ce9178" fill-opacity="0.51"/><rect x="931" y="114" width="1" height="1.3" fill="#ce9178" fill-opacity="0.51"/><rect x="932" y="114" width="1" height="1.3" fill="#ce9178" fill-opacity="0.59"/><rect x="933" y="114" width="1" height="1.3" fill="#ce9178" fill-opacity="0.51"/><rect x="934" y="114" width="1" height="1.3" fill="#ce9178" fill-opacity="0.30"/><rect x="935" y="114" width="1" height="1.3" fill="#ce9178" fill-opacity="0.59"/><rect x="936" y="114" width="1" height="1.3" fill="#ce9178" fill-opacity="0.30"/><rect x="911" y="116" width="1" height="1.3" fill="#c586c0" fill-opacity="0.64"/><rect x="912" y="116" width="1" height="1.3" fill="#c586c0" fill-opacity="0.51"/><rect x="913" y="116" width="1" height="1.3" fill="#c586c0" fill-opacity="0.51"/><rect x="914" y="116" width="1" height="1.3" fill="#c586c0" fill-opacity="0.51"/><rect x="915" y="116" width="1" height="1.3" fill="#c586c0" fill-opacity="0.59"/><rect x="916" y="116" width="1" height="1.3" fill="#c586c0" fill-opacity="0.51"/><rect x="917" y="116" width="1" height="1.3" fill="#c586c0" fill-opacity="0.59"/><rect x="918" y="116" width="1" height="1.3" fill="#c586c0" fill-opacity="0.51"/><rect x="920" y="116" width="1" height="1.3" fill="#ce9178" fill-opacity="0.30"/><rect x="921" y="116" width="1" height="1.3" fill="#ce9178" fill-opacity="0.51"/><rect x="922" y="116" width="1" height="1.3" fill="#ce9178" fill-opacity="0.51"/><rect x="923" y="116" width="1" height="1.3" fill="#ce9178" fill-opacity="0.51"/><rect x="924" y="116" width="1" height="1.3" fill="#ce9178" fill-opacity="0.30"/><rect x="925" y="116" width="1" height="1.3" fill="#ce9178" fill-opacity="0.59"/><rect x="926" y="116" width="1" height="1.3" fill="#ce9178" fill-opacity="0.59"/><rect x="927" y="116" width="1" height="1.3" fill="#ce9178" fill-opacity="0.51"/><rect x="928" y="116" width="1" height="1.3" fill="#ce9178" fill-opacity="0.51"/><rect x="929" y="116" width="1" height="1.3" fill="#ce9178" fill-opacity="0.59"/><rect x="930" y="116" width="1" height="1.3" fill="#ce9178" fill-opacity="0.30"/><rect x="931" y="116" width="1" height="1.3" fill="#ce9178" fill-opacity="0.59"/><rect x="932" y="116" width="1" height="1.3" fill="#ce9178" fill-opacity="0.30"/><rect x="911" y="118" width="1" height="1.3" fill="#c586c0" fill-opacity="0.64"/><rect x="912" y="118" width="1" height="1.3" fill="#c586c0" fill-opacity="0.51"/><rect x="913" y="118" width="1" height="1.3" fill="#c586c0" fill-opacity="0.51"/><rect x="914" y="118" width="1" height="1.3" fill="#c586c0" fill-opacity="0.51"/><rect x="915" y="118" width="1" height="1.3" fill="#c586c0" fill-opacity="0.59"/><rect x="916" y="118" width="1" height="1.3" fill="#c586c0" fill-opacity="0.51"/><rect x="917" y="118" width="1" height="1.3" fill="#c586c0" fill-opacity="0.59"/><rect x="918" y="118" width="1" height="1.3" fill="#c586c0" fill-opacity="0.51"/><rect x="920" y="118" width="1" height="1.3" fill="#ce9178" fill-opacity="0.30"/><rect x="921" y="118" width="1" height="1.3" fill="#ce9178" fill-opacity="0.51"/><rect x="922" y="118" width="1" height="1.3" fill="#ce9178" fill-opacity="0.51"/><rect x="923" y="118" width="1" height="1.3" fill="#ce9178" fill-opacity="0.51"/><rect x="924" y="118" width="1" height="1.3" fill="#ce9178" fill-opacity="0.30"/><rect x="925" y="118" width="1" height="1.3" fill="#ce9178" fill-opacity="0.51"/><rect x="926" y="118" width="1" height="1.3" fill="#ce9178" fill-opacity="0.51"/><rect x="927" y="118" width="1" height="1.3" fill="#ce9178" fill-opacity="0.51"/><rect x="928" y="118" width="1" height="1.3" fill="#ce9178" fill-opacity="0.59"/><rect x="929" y="118" width="1" height="1.3" fill="#ce9178" fill-opacity="0.51"/><rect x="930" y="118" width="1" height="1.3" fill="#ce9178" fill-opacity="0.51"/><rect x="931" y="118" width="1" height="1.3" fill="#ce9178" fill-opacity="0.30"/><rect x="932" y="118" width="1" height="1.3" fill="#ce9178" fill-opacity="0.59"/><rect x="933" y="118" width="1" height="1.3" fill="#ce9178" fill-opacity="0.30"/><rect x="911" y="122" width="1" height="1.3" fill="#569cd6" fill-opacity="0.51"/><rect x="912" y="122" width="1" height="1.3" fill="#569cd6" fill-opacity="0.51"/><rect x="913" y="122" width="1" height="1.3" fill="#569cd6" fill-opacity="0.51"/><rect x="914" y="122" width="1" height="1.3" fill="#569cd6" fill-opacity="0.59"/><rect x="916" y="122" width="1" height="1.3" fill="#dcdcaa" fill-opacity="0.51"/><rect x="917" y="122" width="1" height="1.3" fill="#dcdcaa" fill-opacity="0.51"/><rect x="918" y="122" width="1" height="1.3" fill="#dcdcaa" fill-opacity="0.51"/><rect x="919" y="122" width="1" height="1.3" fill="#dcdcaa" fill-opacity="0.30"/><rect x="920" y="122" width="1" height="1.3" fill="#dcdcaa" fill-opacity="0.51"/><rect x="921" y="122" width="1" height="1.3" fill="#dcdcaa" fill-opacity="0.51"/><rect x="922" y="122" width="1" height="1.3" fill="#dcdcaa" fill-opacity="0.51"/><rect x="923" y="122" width="1" height="1.3" fill="#dcdcaa" fill-opacity="0.51"/><rect x="924" y="122" width="1" height="1.3" fill="#ffd700" fill-opacity="0.42"/><rect x="925" y="122" width="1" height="1.3" fill="#569cd6" fill-opacity="0.51"/><rect x="926" y="122" width="1" height="1.3" fill="#569cd6" fill-opacity="0.51"/><rect x="927" y="122" width="1" height="1.3" fill="#569cd6" fill-opacity="0.51"/><rect x="928" y="122" width="1" height="1.3" fill="#569cd6" fill-opacity="0.59"/><rect x="929" y="122" width="1" height="1.3" fill="#ffd700" fill-opacity="0.42"/><rect x="911" y="124" width="1" height="1.3" fill="#ffd700" fill-opacity="0.42"/><rect x="915" y="126" width="1" height="1.3" fill="#dcdcaa" fill-opacity="0.51"/><rect x="916" y="126" width="1" height="1.3" fill="#dcdcaa" fill-opacity="0.51"/><rect x="917" y="126" width="1" height="1.3" fill="#dcdcaa" fill-opacity="0.51"/><rect x="918" y="126" width="1" height="1.3" fill="#dcdcaa" fill-opacity="0.51"/><rect x="919" y="126" width="1" height="1.3" fill="#dcdcaa" fill-opacity="0.59"/><rect x="920" y="126" width="1" height="1.3" fill="#dcdcaa" fill-opacity="0.59"/><rect x="921" y="126" width="1" height="1.3" fill="#da70d6" fill-opacity="0.42"/><rect x="922" y="126" width="1" height="1.3" fill="#ce9178" fill-opacity="0.30"/><rect x="923" y="126" width="1" height="1.3" fill="#ce9178" fill-opacity="0.64"/><rect x="924" y="126" width="1" height="1.3" fill="#ce9178" fill-opacity="0.51"/><rect x="925" y="126" width="1" height="1.3" fill="#ce9178" fill-opacity="0.59"/><rect x="926" y="126" width="1" height="1.3" fill="#ce9178" fill-opacity="0.59"/><rect x="927" y="126" width="1" height="1.3" fill="#ce9178" fill-opacity="0.51"/><rect x="929" y="126" width="1" height="1.3" fill="#ce9178" fill-opacity="0.51"/><rect x="930" y="126" width="1" height="1.3" fill="#ce9178" fill-opacity="0.51"/><rect x="931" y="126" width="1" height="1.3" fill="#ce9178" fill-opacity="0.51"/><rect x="932" y="126" width="1" height="1.3" fill="#ce9178" fill-opacity="0.59"/><rect x="933" y="126" width="1" height="1.3" fill="#ce9178" fill-opacity="0.59"/><rect x="934" y="126" width="1" height="1.3" fill="#ce9178" fill-opacity="0.42"/><rect x="935" y="126" width="1" height="1.3" fill="#d7ba7d" fill-opacity="0.42"/><rect x="936" y="126" width="1" height="1.3" fill="#d7ba7d" fill-opacity="0.51"/><rect x="937" y="126" width="1" height="1.3" fill="#ce9178" fill-opacity="0.30"/><rect x="938" y="126" width="1" height="1.3" fill="#da70d6" fill-opacity="0.42"/><rect x="939" y="126" width="1" height="1.3" fill="#cccccc" fill-opacity="0.30"/><rect x="915" y="130" width="1" height="1.3" fill="#6a9955" fill-opacity="0.42"/><rect x="916" y="130" width="1" height="1.3" fill="#6a9955" fill-opacity="0.64"/><rect x="918" y="130" width="1" height="1.3" fill="#6a9955" fill-opacity="0.64"/><rect x="919" y="130" width="1" height="1.3" fill="#6a9955" fill-opacity="0.51"/><rect x="920" y="130" width="1" height="1.3" fill="#6a9955" fill-opacity="0.51"/><rect x="921" y="130" width="1" height="1.3" fill="#6a9955" fill-opacity="0.51"/><rect x="922" y="130" width="1" height="1.3" fill="#6a9955" fill-opacity="0.59"/><rect x="924" y="130" width="1" height="1.3" fill="#6a9955" fill-opacity="0.51"/><rect x="925" y="130" width="1" height="1.3" fill="#6a9955" fill-opacity="0.59"/><rect x="926" y="130" width="1" height="1.3" fill="#6a9955" fill-opacity="0.51"/><rect x="927" y="130" width="1" height="1.3" fill="#6a9955" fill-opacity="0.51"/><rect x="929" y="130" width="1" height="1.3" fill="#6a9955" fill-opacity="0.51"/><rect x="930" y="130" width="1" height="1.3" fill="#6a9955" fill-opacity="0.51"/><rect x="931" y="130" width="1" height="1.3" fill="#6a9955" fill-opacity="0.59"/><rect x="932" y="130" width="1" height="1.3" fill="#6a9955" fill-opacity="0.51"/><rect x="933" y="130" width="1" height="1.3" fill="#6a9955" fill-opacity="0.51"/><rect x="934" y="130" width="1" height="1.3" fill="#6a9955" fill-opacity="0.51"/><rect x="935" y="130" width="1" height="1.3" fill="#6a9955" fill-opacity="0.51"/><rect x="936" y="130" width="1" height="1.3" fill="#6a9955" fill-opacity="0.59"/><rect x="937" y="130" width="1" height="1.3" fill="#6a9955" fill-opacity="0.51"/><rect x="938" y="130" width="1" height="1.3" fill="#6a9955" fill-opacity="0.51"/><rect x="939" y="130" width="1" height="1.3" fill="#6a9955" fill-opacity="0.51"/><rect x="941" y="130" width="1" height="1.3" fill="#6a9955" fill-opacity="0.64"/><rect x="942" y="130" width="1" height="1.3" fill="#6a9955" fill-opacity="0.42"/><rect x="915" y="132" width="1" height="1.3" fill="#4ec9b0" fill-opacity="0.51"/><rect x="916" y="132" width="1" height="1.3" fill="#4ec9b0" fill-opacity="0.51"/><rect x="917" y="132" width="1" height="1.3" fill="#4ec9b0" fill-opacity="0.51"/><rect x="918" y="132" width="1" height="1.3" fill="#4ec9b0" fill-opacity="0.30"/><rect x="919" y="132" width="1" height="1.3" fill="#4ec9b0" fill-opacity="0.51"/><rect x="920" y="132" width="1" height="1.3" fill="#4ec9b0" fill-opacity="0.59"/><rect x="921" y="132" width="1" height="1.3" fill="#4ec9b0" fill-opacity="0.51"/><rect x="922" y="132" width="1" height="1.3" fill="#4ec9b0" fill-opacity="0.51"/><rect x="923" y="132" width="1" height="1.3" fill="#4ec9b0" fill-opacity="0.30"/><rect x="924" y="132" width="1" height="1.3" fill="#4ec9b0" fill-opacity="0.51"/><rect x="925" y="132" width="1" height="1.3" fill="#4ec9b0" fill-opacity="0.51"/><rect x="926" y="132" width="1" height="1.3" fill="#4ec9b0" fill-opacity="0.59"/><rect x="927" y="132" width="1" height="1.3" fill="#4ec9b0" fill-opacity="0.51"/><rect x="928" y="132" width="1" height="1.3" fill="#4ec9b0" fill-opacity="0.30"/><rect x="929" y="132" width="1" height="1.3" fill="#4ec9b0" fill-opacity="0.59"/><rect x="931" y="132" width="1" height="1.3" fill="#9cdcfe" fill-opacity="0.51"/><rect x="932" y="132" width="1" height="1.3" fill="#9cdcfe" fill-opacity="0.59"/><rect x="933" y="132" width="1" height="1.3" fill="#9cdcfe" fill-opacity="0.51"/><rect x="934" y="132" width="1" height="1.3" fill="#9cdcfe" fill-opacity="0.51"/><rect x="935" y="132" width="1" height="1.3" fill="#9cdcfe" fill-opacity="0.30"/><rect x="936" y="132" width="1" height="1.3" fill="#9cdcfe" fill-opacity="0.51"/><rect x="937" y="132" width="1" height="1.3" fill="#9cdcfe" fill-opacity="0.51"/><rect x="938" y="132" width="1" height="1.3" fill="#9cdcfe" fill-opacity="0.59"/><rect x="939" y="132" width="1" height="1.3" fill="#9cdcfe" fill-opacity="0.51"/><rect x="940" y="132" width="1" height="1.3" fill="#cccccc" fill-opacity="0.30"/><rect x="915" y="134" width="1" height="1.3" fill="#4ec9b0" fill-opacity="0.51"/><rect x="916" y="134" width="1" height="1.3" fill="#4ec9b0" fill-opacity="0.51"/><rect x="917" y="134" width="1" height="1.3" fill="#4ec9b0" fill-opacity="0.51"/><rect x="918" y="134" width="1" height="1.3" fill="#4ec9b0" fill-opacity="0.59"/><rect x="919" y="134" width="1" height="1.3" fill="#4ec9b0" fill-opacity="0.64"/><rect x="920" y="134" width="1" height="1.3" fill="#4ec9b0" fill-opacity="0.64"/><rect x="921" y="134" width="1" height="1.3" fill="#4ec9b0" fill-opacity="0.30"/><rect x="922" y="134" width="1" height="1.3" fill="#4ec9b0" fill-opacity="0.59"/><rect x="924" y="134" width="1" height="1.3" fill="#9cdcfe" fill-opacity="0.59"/><rect x="925" y="134" width="1" height="1.3" fill="#9cdcfe" fill-opacity="0.59"/><rect x="926" y="134" width="1" height="1.3" fill="#9cdcfe" fill-opacity="0.51"/><rect x="927" y="134" width="1" height="1.3" fill="#9cdcfe" fill-opacity="0.51"/><rect x="928" y="134" width="1" height="1.3" fill="#9cdcfe" fill-opacity="0.59"/><rect x="929" y="134" width="1" height="1.3" fill="#9cdcfe" fill-opacity="0.30"/><rect x="930" y="134" width="1" height="1.3" fill="#9cdcfe" fill-opacity="0.51"/><rect x="931" y="134" width="1" height="1.3" fill="#9cdcfe" fill-opacity="0.51"/><rect x="932" y="134" width="1" height="1.3" fill="#9cdcfe" fill-opacity="0.51"/><rect x="933" y="134" width="1" height="1.3" fill="#9cdcfe" fill-opacity="0.51"/><rect x="934" y="134" width="1" height="1.3" fill="#cccccc" fill-opacity="0.30"/><rect x="915" y="136" width="1" height="1.3" fill="#dcdcaa" fill-opacity="0.51"/><rect x="916" y="136" width="1" height="1.3" fill="#dcdcaa" fill-opacity="0.51"/><rect x="917" y="136" width="1" height="1.3" fill="#dcdcaa" fill-opacity="0.51"/><rect x="918" y="136" width="1" height="1.3" fill="#dcdcaa" fill-opacity="0.30"/><rect x="919" y="136" width="1" height="1.3" fill="#dcdcaa" fill-opacity="0.51"/><rect x="920" y="136" width="1" height="1.3" fill="#dcdcaa" fill-opacity="0.59"/><rect x="921" y="136" width="1" height="1.3" fill="#dcdcaa" fill-opacity="0.51"/><rect x="922" y="136" width="1" height="1.3" fill="#dcdcaa" fill-opacity="0.51"/><rect x="923" y="136" width="1" height="1.3" fill="#dcdcaa" fill-opacity="0.30"/><rect x="924" y="136" width="1" height="1.3" fill="#dcdcaa" fill-opacity="0.51"/><rect x="925" y="136" width="1" height="1.3" fill="#dcdcaa" fill-opacity="0.51"/><rect x="926" y="136" width="1" height="1.3" fill="#dcdcaa" fill-opacity="0.59"/><rect x="927" y="136" width="1" height="1.3" fill="#dcdcaa" fill-opacity="0.51"/><rect x="928" y="136" width="1" height="1.3" fill="#da70d6" fill-opacity="0.42"/><rect x="929" y="136" width="1" height="1.3" fill="#cccccc" fill-opacity="0.64"/><rect x="930" y="136" width="1" height="1.3" fill="#9cdcfe" fill-opacity="0.51"/><rect x="931" y="136" width="1" height="1.3" fill="#9cdcfe" fill-opacity="0.59"/><rect x="932" y="136" width="1" height="1.3" fill="#9cdcfe" fill-opacity="0.51"/><rect x="933" y="136" width="1" height="1.3" fill="#9cdcfe" fill-opacity="0.51"/><rect x="934" y="136" width="1" height="1.3" fill="#9cdcfe" fill-opacity="0.30"/><rect x="935" y="136" width="1" height="1.3" fill="#9cdcfe" fill-opacity="0.51"/><rect x="936" y="136" width="1" height="1.3" fill="#9cdcfe" fill-opacity="0.51"/><rect x="937" y="136" width="1" height="1.3" fill="#9cdcfe" fill-opacity="0.59"/><rect x="938" y="136" width="1" height="1.3" fill="#9cdcfe" fill-opacity="0.51"/><rect x="939" y="136" width="1" height="1.3" fill="#da70d6" fill-opacity="0.42"/><rect x="940" y="136" width="1" height="1.3" fill="#cccccc" fill-opacity="0.30"/><rect x="915" y="138" width="1" height="1.3" fill="#dcdcaa" fill-opacity="0.51"/><rect x="916" y="138" width="1" height="1.3" fill="#dcdcaa" fill-opacity="0.51"/><rect x="917" y="138" width="1" height="1.3" fill="#dcdcaa" fill-opacity="0.51"/><rect x="918" y="138" width="1" height="1.3" fill="#dcdcaa" fill-opacity="0.51"/><rect x="919" y="138" width="1" height="1.3" fill="#dcdcaa" fill-opacity="0.59"/><rect x="920" y="138" width="1" height="1.3" fill="#dcdcaa" fill-opacity="0.59"/><rect x="921" y="138" width="1" height="1.3" fill="#da70d6" fill-opacity="0.42"/><rect x="922" y="138" width="1" height="1.3" fill="#ce9178" fill-opacity="0.30"/><rect x="923" y="138" width="1" height="1.3" fill="#ce9178" fill-opacity="0.64"/><rect x="924" y="138" width="1" height="1.3" fill="#ce9178" fill-opacity="0.59"/><rect x="925" y="138" width="1" height="1.3" fill="#ce9178" fill-opacity="0.51"/><rect x="926" y="138" width="1" height="1.3" fill="#ce9178" fill-opacity="0.51"/><rect x="928" y="138" width="1" height="1.3" fill="#ce9178" fill-opacity="0.51"/><rect x="929" y="138" width="1" height="1.3" fill="#ce9178" fill-opacity="0.51"/><rect x="931" y="138" width="1" height="1.3" fill="#9cdcfe" fill-opacity="0.64"/><rect x="932" y="138" width="1" height="1.3" fill="#9cdcfe" fill-opacity="0.51"/><rect x="934" y="138" width="1" height="1.3" fill="#ce9178" fill-opacity="0.51"/><rect x="935" y="138" width="1" height="1.3" fill="#ce9178" fill-opacity="0.59"/><rect x="936" y="138" width="1" height="1.3" fill="#ce9178" fill-opacity="0.51"/><rect x="937" y="138" width="1" height="1.3" fill="#ce9178" fill-opacity="0.51"/><rect x="939" y="138" width="1" height="1.3" fill="#ce9178" fill-opacity="0.51"/><rect x="940" y="138" width="1" height="1.3" fill="#ce9178" fill-opacity="0.51"/><rect x="941" y="138" width="1" height="1.3" fill="#ce9178" fill-opacity="0.59"/><rect x="942" y="138" width="1" height="1.3" fill="#ce9178" fill-opacity="0.59"/><rect x="944" y="138" width="1" height="1.3" fill="#9cdcfe" fill-opacity="0.64"/><rect x="945" y="138" width="1" height="1.3" fill="#9cdcfe" fill-opacity="0.59"/><rect x="947" y="138" width="1" height="1.3" fill="#ce9178" fill-opacity="0.64"/><rect x="948" y="138" width="1" height="1.3" fill="#ce9178" fill-opacity="0.64"/><rect x="949" y="138" width="1" height="1.3" fill="#ce9178" fill-opacity="0.64"/><rect x="951" y="138" width="1" height="1.3" fill="#ce9178" fill-opacity="0.51"/><rect x="952" y="138" width="1" height="1.3" fill="#ce9178" fill-opacity="0.51"/><rect x="953" y="138" width="1" height="1.3" fill="#ce9178" fill-opacity="0.51"/><rect x="954" y="138" width="1" height="1.3" fill="#ce9178" fill-opacity="0.51"/><rect x="955" y="138" width="1" height="1.3" fill="#ce9178" fill-opacity="0.42"/><rect x="956" y="138" width="1" height="1.3" fill="#ce9178" fill-opacity="0.51"/><rect x="957" y="138" width="1" height="1.3" fill="#ce9178" fill-opacity="0.42"/><rect x="958" y="138" width="1" height="1.3" fill="#ce9178" fill-opacity="0.30"/><rect x="960" y="138" width="1" height="1.3" fill="#9cdcfe" fill-opacity="0.64"/><rect x="961" y="138" width="1" height="1.3" fill="#9cdcfe" fill-opacity="0.51"/><rect x="962" y="138" width="1" height="1.3" fill="#9cdcfe" fill-opacity="0.64"/><rect x="963" y="138" width="1" height="1.3" fill="#9cdcfe" fill-opacity="0.51"/><rect x="964" y="138" width="1" height="1.3" fill="#9cdcfe" fill-opacity="0.64"/><rect x="965" y="138" width="1" height="1.3" fill="#9cdcfe" fill-opacity="0.51"/><rect x="966" y="138" width="1" height="1.3" fill="#9cdcfe" fill-opacity="0.64"/><rect x="967" y="138" width="1" height="1.3" fill="#9cdcfe" fill-opacity="0.51"/><rect x="968" y="138" width="1" height="1.3" fill="#ce9178" fill-opacity="0.30"/><rect x="970" y="138" width="1" height="1.3" fill="#ce9178" fill-opacity="0.30"/><rect x="971" y="138" width="1" height="1.3" fill="#cccccc" fill-opacity="0.30"/><rect x="922" y="140" width="1" height="1.3" fill="#569cd6" fill-opacity="0.64"/><rect x="923" y="140" width="1" height="1.3" fill="#569cd6" fill-opacity="0.64"/><rect x="924" y="140" width="1" height="1.3" fill="#569cd6" fill-opacity="0.64"/><rect x="925" y="140" width="1" height="1.3" fill="#569cd6" fill-opacity="0.64"/><rect x="926" y="140" width="1" height="1.3" fill="#569cd6" fill-opacity="0.64"/><rect x="927" y="140" width="1" height="1.3" fill="#569cd6" fill-opacity="0.64"/><rect x="928" y="140" width="1" height="1.3" fill="#569cd6" fill-opacity="0.30"/><rect x="929" y="140" width="1" height="1.3" fill="#569cd6" fill-opacity="0.64"/><rect x="930" y="140" width="1" height="1.3" fill="#569cd6" fill-opacity="0.64"/><rect x="931" y="140" width="1" height="1.3" fill="#569cd6" fill-opacity="0.64"/><rect x="932" y="140" width="1" height="1.3" fill="#569cd6" fill-opacity="0.30"/><rect x="933" y="140" width="1" height="1.3" fill="#569cd6" fill-opacity="0.64"/><rect x="934" y="140" width="1" height="1.3" fill="#569cd6" fill-opacity="0.64"/><rect x="935" y="140" width="1" height="1.3" fill="#569cd6" fill-opacity="0.64"/><rect x="936" y="140" width="1" height="1.3" fill="#569cd6" fill-opacity="0.64"/><rect x="937" y="140" width="1" height="1.3" fill="#569cd6" fill-opacity="0.64"/><rect x="938" y="140" width="1" height="1.3" fill="#569cd6" fill-opacity="0.64"/><rect x="939" y="140" width="1" height="1.3" fill="#cccccc" fill-opacity="0.30"/><rect x="922" y="142" width="1" height="1.3" fill="#9cdcfe" fill-opacity="0.51"/><rect x="923" y="142" width="1" height="1.3" fill="#9cdcfe" fill-opacity="0.59"/><rect x="924" y="142" width="1" height="1.3" fill="#9cdcfe" fill-opacity="0.51"/><rect x="925" y="142" width="1" height="1.3" fill="#9cdcfe" fill-opacity="0.51"/><rect x="926" y="142" width="1" height="1.3" fill="#9cdcfe" fill-opacity="0.30"/><rect x="927" y="142" width="1" height="1.3" fill="#9cdcfe" fill-opacity="0.51"/><rect x="928" y="142" width="1" height="1.3" fill="#9cdcfe" fill-opacity="0.51"/><rect x="929" y="142" width="1" height="1.3" fill="#9cdcfe" fill-opacity="0.59"/><rect x="930" y="142" width="1" height="1.3" fill="#9cdcfe" fill-opacity="0.51"/><rect x="931" y="142" width="1" height="1.3" fill="#cccccc" fill-opacity="0.30"/><rect x="932" y="142" width="1" height="1.3" fill="#9cdcfe" fill-opacity="0.51"/><rect x="933" y="142" width="1" height="1.3" fill="#9cdcfe" fill-opacity="0.51"/><rect x="934" y="142" width="1" height="1.3" fill="#9cdcfe" fill-opacity="0.51"/><rect x="935" y="142" width="1" height="1.3" fill="#9cdcfe" fill-opacity="0.51"/><rect x="936" y="142" width="1" height="1.3" fill="#9cdcfe" fill-opacity="0.51"/><rect x="937" y="142" width="1" height="1.3" fill="#cccccc" fill-opacity="0.30"/><rect x="922" y="144" width="1" height="1.3" fill="#179fff" fill-opacity="0.42"/><rect x="923" y="144" width="1" height="1.3" fill="#9cdcfe" fill-opacity="0.51"/><rect x="924" y="144" width="1" height="1.3" fill="#9cdcfe" fill-opacity="0.59"/><rect x="925" y="144" width="1" height="1.3" fill="#9cdcfe" fill-opacity="0.51"/><rect x="926" y="144" width="1" height="1.3" fill="#9cdcfe" fill-opacity="0.51"/><rect x="927" y="144" width="1" height="1.3" fill="#9cdcfe" fill-opacity="0.30"/><rect x="928" y="144" width="1" height="1.3" fill="#9cdcfe" fill-opacity="0.51"/><rect x="929" y="144" width="1" height="1.3" fill="#9cdcfe" fill-opacity="0.51"/><rect x="930" y="144" width="1" height="1.3" fill="#9cdcfe" fill-opacity="0.59"/><rect x="931" y="144" width="1" height="1.3" fill="#9cdcfe" fill-opacity="0.51"/><rect x="932" y="144" width="1" height="1.3" fill="#cccccc" fill-opacity="0.30"/><rect x="933" y="144" width="1" height="1.3" fill="#9cdcfe" fill-opacity="0.59"/><rect x="934" y="144" width="1" height="1.3" fill="#9cdcfe" fill-opacity="0.51"/><rect x="935" y="144" width="1" height="1.3" fill="#9cdcfe" fill-opacity="0.51"/><rect x="936" y="144" width="1" height="1.3" fill="#9cdcfe" fill-opacity="0.59"/><rect x="937" y="144" width="1" height="1.3" fill="#9cdcfe" fill-opacity="0.51"/><rect x="938" y="144" width="1" height="1.3" fill="#9cdcfe" fill-opacity="0.51"/><rect x="939" y="144" width="1" height="1.3" fill="#9cdcfe" fill-opacity="0.51"/><rect x="940" y="144" width="1" height="1.3" fill="#9cdcfe" fill-opacity="0.51"/><rect x="942" y="144" width="1" height="1.3" fill="#cccccc" fill-opacity="0.64"/><rect x="944" y="144" width="1" height="1.3" fill="#569cd6" fill-opacity="0.64"/><rect x="945" y="144" width="1" height="1.3" fill="#569cd6" fill-opacity="0.64"/><rect x="946" y="144" width="1" height="1.3" fill="#569cd6" fill-opacity="0.64"/><rect x="947" y="144" width="1" height="1.3" fill="#569cd6" fill-opacity="0.64"/><rect x="948" y="144" width="1" height="1.3" fill="#569cd6" fill-opacity="0.30"/><rect x="949" y="144" width="1" height="1.3" fill="#569cd6" fill-opacity="0.64"/><rect x="950" y="144" width="1" height="1.3" fill="#569cd6" fill-opacity="0.64"/><rect x="951" y="144" width="1" height="1.3" fill="#569cd6" fill-opacity="0.64"/><rect x="952" y="144" width="1" height="1.3" fill="#569cd6" fill-opacity="0.64"/><rect x="953" y="144" width="1" height="1.3" fill="#569cd6" fill-opacity="0.64"/><rect x="954" y="144" width="1" height="1.3" fill="#569cd6" fill-opacity="0.64"/><rect x="955" y="144" width="1" height="1.3" fill="#569cd6" fill-opacity="0.64"/><rect x="956" y="144" width="1" height="1.3" fill="#569cd6" fill-opacity="0.30"/><rect x="957" y="144" width="1" height="1.3" fill="#569cd6" fill-opacity="0.64"/><rect x="958" y="144" width="1" height="1.3" fill="#569cd6" fill-opacity="0.64"/><rect x="959" y="144" width="1" height="1.3" fill="#569cd6" fill-opacity="0.64"/><rect x="960" y="144" width="1" height="1.3" fill="#569cd6" fill-opacity="0.64"/><rect x="961" y="144" width="1" height="1.3" fill="#569cd6" fill-opacity="0.30"/><rect x="962" y="144" width="1" height="1.3" fill="#569cd6" fill-opacity="0.64"/><rect x="963" y="144" width="1" height="1.3" fill="#569cd6" fill-opacity="0.64"/><rect x="964" y="144" width="1" height="1.3" fill="#569cd6" fill-opacity="0.64"/><rect x="965" y="144" width="1" height="1.3" fill="#179fff" fill-opacity="0.42"/><rect x="967" y="144" width="1" height="1.3" fill="#cccccc" fill-opacity="0.51"/><rect x="969" y="144" width="1" height="1.3" fill="#ce9178" fill-opacity="0.30"/><rect x="970" y="144" width="1" height="1.3" fill="#ce9178" fill-opacity="0.64"/><rect x="971" y="144" width="1" height="1.3" fill="#ce9178" fill-opacity="0.51"/><rect x="972" y="144" width="1" height="1.3" fill="#ce9178" fill-opacity="0.64"/><rect x="973" y="144" width="1" height="1.3" fill="#ce9178" fill-opacity="0.51"/><rect x="974" y="144" width="1" height="1.3" fill="#ce9178" fill-opacity="0.42"/><rect x="975" y="144" width="1" height="1.3" fill="#ce9178" fill-opacity="0.30"/><rect x="977" y="144" width="1" height="1.3" fill="#cccccc" fill-opacity="0.30"/><rect x="979" y="144" width="1" height="1.3" fill="#ce9178" fill-opacity="0.30"/><rect x="980" y="144" width="1" height="1.3" fill="#ce9178" fill-opacity="0.30"/><rect x="981" y="144" width="1" height="1.3" fill="#cccccc" fill-opacity="0.30"/><rect x="922" y="146" width="1" height="1.3" fill="#179fff" fill-opacity="0.42"/><rect x="923" y="146" width="1" height="1.3" fill="#9cdcfe" fill-opacity="0.51"/><rect x="924" y="146" width="1" height="1.3" fill="#9cdcfe" fill-opacity="0.59"/><rect x="925" y="146" width="1" height="1.3" fill="#9cdcfe" fill-opacity="0.51"/><rect x="926" y="146" width="1" height="1.3" fill="#9cdcfe" fill-opacity="0.51"/><rect x="927" y="146" width="1" height="1.3" fill="#9cdcfe" fill-opacity="0.30"/><rect x="928" y="146" width="1" height="1.3" fill="#9cdcfe" fill-opacity="0.51"/><rect x="929" y="146" width="1" height="1.3" fill="#9cdcfe" fill-opacity="0.51"/><rect x="930" y="146" width="1" height="1.3" fill="#9cdcfe" fill-opacity="0.59"/><rect x="931" y="146" width="1" height="1.3" fill="#9cdcfe" fill-opacity="0.51"/><rect x="932" y="146" width="1" height="1.3" fill="#cccccc" fill-opacity="0.30"/><rect x="933" y="146" width="1" height="1.3" fill="#9cdcfe" fill-opacity="0.59"/><rect x="934" y="146" width="1" height="1.3" fill="#9cdcfe" fill-opacity="0.51"/><rect x="935" y="146" width="1" height="1.3" fill="#9cdcfe" fill-opacity="0.51"/><rect x="936" y="146" width="1" height="1.3" fill="#9cdcfe" fill-opacity="0.59"/><rect x="937" y="146" width="1" height="1.3" fill="#9cdcfe" fill-opacity="0.51"/><rect x="938" y="146" width="1" height="1.3" fill="#9cdcfe" fill-opacity="0.51"/><rect x="939" y="146" width="1" height="1.3" fill="#9cdcfe" fill-opacity="0.51"/><rect x="940" y="146" width="1" height="1.3" fill="#9cdcfe" fill-opacity="0.51"/><rect x="942" y="146" width="1" height="1.3" fill="#cccccc" fill-opacity="0.64"/><rect x="944" y="146" width="1" height="1.3" fill="#569cd6" fill-opacity="0.64"/><rect x="945" y="146" width="1" height="1.3" fill="#569cd6" fill-opacity="0.64"/><rect x="946" y="146" width="1" height="1.3" fill="#569cd6" fill-opacity="0.64"/><rect x="947" y="146" width="1" height="1.3" fill="#569cd6" fill-opacity="0.64"/><rect x="948" y="146" width="1" height="1.3" fill="#569cd6" fill-opacity="0.30"/><rect x="949" y="146" width="1" height="1.3" fill="#569cd6" fill-opacity="0.64"/><rect x="950" y="146" width="1" height="1.3" fill="#569cd6" fill-opacity="0.64"/><rect x="951" y="146" width="1" height="1.3" fill="#569cd6" fill-opacity="0.64"/><rect x="952" y="146" width="1" height="1.3" fill="#569cd6" fill-opacity="0.64"/><rect x="953" y="146" width="1" height="1.3" fill="#569cd6" fill-opacity="0.64"/><rect x="954" y="146" width="1" height="1.3" fill="#569cd6" fill-opacity="0.64"/><rect x="955" y="146" width="1" height="1.3" fill="#569cd6" fill-opacity="0.64"/><rect x="956" y="146" width="1" height="1.3" fill="#569cd6" fill-opacity="0.30"/><rect x="957" y="146" width="1" height="1.3" fill="#569cd6" fill-opacity="0.64"/><rect x="958" y="146" width="1" height="1.3" fill="#569cd6" fill-opacity="0.64"/><rect x="959" y="146" width="1" height="1.3" fill="#179fff" fill-opacity="0.42"/><rect x="961" y="146" width="1" height="1.3" fill="#cccccc" fill-opacity="0.51"/><rect x="963" y="146" width="1" height="1.3" fill="#ce9178" fill-opacity="0.30"/><rect x="964" y="146" width="1" height="1.3" fill="#ce9178" fill-opacity="0.64"/><rect x="965" y="146" width="1" height="1.3" fill="#ce9178" fill-opacity="0.64"/><rect x="966" y="146" width="1" height="1.3" fill="#ce9178" fill-opacity="0.30"/><rect x="968" y="146" width="1" height="1.3" fill="#cccccc" fill-opacity="0.30"/><rect x="970" y="146" width="1" height="1.3" fill="#ce9178" fill-opacity="0.30"/><rect x="971" y="146" width="1" height="1.3" fill="#ce9178" fill-opacity="0.30"/><rect x="972" y="146" width="1" height="1.3" fill="#cccccc" fill-opacity="0.30"/><rect x="922" y="148" width="1" height="1.3" fill="#179fff" fill-opacity="0.42"/><rect x="923" y="148" width="1" height="1.3" fill="#9cdcfe" fill-opacity="0.51"/><rect x="924" y="148" width="1" height="1.3" fill="#9cdcfe" fill-opacity="0.59"/><rect x="925" y="148" width="1" height="1.3" fill="#9cdcfe" fill-opacity="0.51"/><rect x="926" y="148" width="1" height="1.3" fill="#9cdcfe" fill-opacity="0.51"/><rect x="927" y="148" width="1" height="1.3" fill="#9cdcfe" fill-opacity="0.30"/><rect x="928" y="148" width="1" height="1.3" fill="#9cdcfe" fill-opacity="0.51"/><rect x="929" y="148" width="1" height="1.3" fill="#9cdcfe" fill-opacity="0.51"/><rect x="930" y="148" width="1" height="1.3" fill="#9cdcfe" fill-opacity="0.59"/><rect x="931" y="148" width="1" height="1.3" fill="#9cdcfe" fill-opacity="0.51"/><rect x="932" y="148" width="1" height="1.3" fill="#cccccc" fill-opacity="0.30"/><rect x="933" y="148" width="1" height="1.3" fill="#9cdcfe" fill-opacity="0.59"/><rect x="934" y="148" width="1" height="1.3" fill="#9cdcfe" fill-opacity="0.51"/><rect x="935" y="148" width="1" height="1.3" fill="#9cdcfe" fill-opacity="0.51"/><rect x="936" y="148" width="1" height="1.3" fill="#9cdcfe" fill-opacity="0.59"/><rect x="937" y="148" width="1" height="1.3" fill="#9cdcfe" fill-opacity="0.51"/><rect x="938" y="148" width="1" height="1.3" fill="#9cdcfe" fill-opacity="0.51"/><rect x="939" y="148" width="1" height="1.3" fill="#9cdcfe" fill-opacity="0.51"/><rect x="940" y="148" width="1" height="1.3" fill="#9cdcfe" fill-opacity="0.51"/><rect x="942" y="148" width="1" height="1.3" fill="#cccccc" fill-opacity="0.64"/><rect x="944" y="148" width="1" height="1.3" fill="#569cd6" fill-opacity="0.64"/><rect x="945" y="148" width="1" height="1.3" fill="#569cd6" fill-opacity="0.64"/><rect x="946" y="148" width="1" height="1.3" fill="#569cd6" fill-opacity="0.64"/><rect x="947" y="148" width="1" height="1.3" fill="#569cd6" fill-opacity="0.64"/><rect x="948" y="148" width="1" height="1.3" fill="#569cd6" fill-opacity="0.30"/><rect x="949" y="148" width="1" height="1.3" fill="#569cd6" fill-opacity="0.64"/><rect x="950" y="148" width="1" height="1.3" fill="#569cd6" fill-opacity="0.64"/><rect x="951" y="148" width="1" height="1.3" fill="#569cd6" fill-opacity="0.64"/><rect x="952" y="148" width="1" height="1.3" fill="#569cd6" fill-opacity="0.64"/><rect x="953" y="148" width="1" height="1.3" fill="#569cd6" fill-opacity="0.64"/><rect x="954" y="148" width="1" height="1.3" fill="#569cd6" fill-opacity="0.64"/><rect x="955" y="148" width="1" height="1.3" fill="#569cd6" fill-opacity="0.64"/><rect x="956" y="148" width="1" height="1.3" fill="#569cd6" fill-opacity="0.30"/><rect x="957" y="148" width="1" height="1.3" fill="#569cd6" fill-opacity="0.64"/><rect x="958" y="148" width="1" height="1.3" fill="#569cd6" fill-opacity="0.64"/><rect x="959" y="148" width="1" height="1.3" fill="#569cd6" fill-opacity="0.64"/><rect x="960" y="148" width="1" height="1.3" fill="#179fff" fill-opacity="0.42"/><rect x="962" y="148" width="1" height="1.3" fill="#cccccc" fill-opacity="0.51"/><rect x="964" y="148" width="1" height="1.3" fill="#ce9178" fill-opacity="0.30"/><rect x="965" y="148" width="1" height="1.3" fill="#ce9178" fill-opacity="0.64"/><rect x="966" y="148" width="1" height="1.3" fill="#ce9178" fill-opacity="0.64"/><rect x="967" y="148" width="1" height="1.3" fill="#ce9178" fill-opacity="0.64"/><rect x="968" y="148" width="1" height="1.3" fill="#ce9178" fill-opacity="0.30"/><rect x="970" y="148" width="1" height="1.3" fill="#cccccc" fill-opacity="0.30"/><rect x="972" y="148" width="1" height="1.3" fill="#ce9178" fill-opacity="0.30"/><rect x="973" y="148" width="1" height="1.3" fill="#ce9178" fill-opacity="0.30"/><rect x="974" y="148" width="1" height="1.3" fill="#cccccc" fill-opacity="0.30"/><rect x="922" y="150" width="1" height="1.3" fill="#179fff" fill-opacity="0.42"/><rect x="923" y="150" width="1" height="1.3" fill="#9cdcfe" fill-opacity="0.51"/><rect x="924" y="150" width="1" height="1.3" fill="#9cdcfe" fill-opacity="0.59"/><rect x="925" y="150" width="1" height="1.3" fill="#9cdcfe" fill-opacity="0.51"/><rect x="926" y="150" width="1" height="1.3" fill="#9cdcfe" fill-opacity="0.51"/><rect x="927" y="150" width="1" height="1.3" fill="#9cdcfe" fill-opacity="0.30"/><rect x="928" y="150" width="1" height="1.3" fill="#9cdcfe" fill-opacity="0.51"/><rect x="929" y="150" width="1" height="1.3" fill="#9cdcfe" fill-opacity="0.51"/><rect x="930" y="150" width="1" height="1.3" fill="#9cdcfe" fill-opacity="0.59"/><rect x="931" y="150" width="1" height="1.3" fill="#9cdcfe" fill-opacity="0.51"/><rect x="932" y="150" width="1" height="1.3" fill="#cccccc" fill-opacity="0.30"/><rect x="933" y="150" width="1" height="1.3" fill="#9cdcfe" fill-opacity="0.59"/><rect x="934" y="150" width="1" height="1.3" fill="#9cdcfe" fill-opacity="0.51"/><rect x="935" y="150" width="1" height="1.3" fill="#9cdcfe" fill-opacity="0.51"/><rect x="936" y="150" width="1" height="1.3" fill="#9cdcfe" fill-opacity="0.59"/><rect x="937" y="150" width="1" height="1.3" fill="#9cdcfe" fill-opacity="0.51"/><rect x="938" y="150" width="1" height="1.3" fill="#9cdcfe" fill-opacity="0.51"/><rect x="939" y="150" width="1" height="1.3" fill="#9cdcfe" fill-opacity="0.51"/><rect x="940" y="150" width="1" height="1.3" fill="#9cdcfe" fill-opacity="0.51"/><rect x="942" y="150" width="1" height="1.3" fill="#cccccc" fill-opacity="0.64"/><rect x="944" y="150" width="1" height="1.3" fill="#569cd6" fill-opacity="0.64"/><rect x="945" y="150" width="1" height="1.3" fill="#569cd6" fill-opacity="0.64"/><rect x="946" y="150" width="1" height="1.3" fill="#569cd6" fill-opacity="0.64"/><rect x="947" y="150" width="1" height="1.3" fill="#569cd6" fill-opacity="0.64"/><rect x="948" y="150" width="1" height="1.3" fill="#569cd6" fill-opacity="0.30"/><rect x="949" y="150" width="1" height="1.3" fill="#569cd6" fill-opacity="0.64"/><rect x="950" y="150" width="1" height="1.3" fill="#569cd6" fill-opacity="0.64"/><rect x="951" y="150" width="1" height="1.3" fill="#569cd6" fill-opacity="0.64"/><rect x="952" y="150" width="1" height="1.3" fill="#569cd6" fill-opacity="0.64"/><rect x="953" y="150" width="1" height="1.3" fill="#569cd6" fill-opacity="0.64"/><rect x="954" y="150" width="1" height="1.3" fill="#569cd6" fill-opacity="0.64"/><rect x="955" y="150" width="1" height="1.3" fill="#569cd6" fill-opacity="0.64"/><rect x="956" y="150" width="1" height="1.3" fill="#569cd6" fill-opacity="0.30"/><rect x="957" y="150" width="1" height="1.3" fill="#569cd6" fill-opacity="0.64"/><rect x="958" y="150" width="1" height="1.3" fill="#569cd6" fill-opacity="0.64"/><rect x="959" y="150" width="1" height="1.3" fill="#569cd6" fill-opacity="0.64"/><rect x="960" y="150" width="1" height="1.3" fill="#569cd6" fill-opacity="0.64"/><rect x="961" y="150" width="1" height="1.3" fill="#569cd6" fill-opacity="0.64"/><rect x="962" y="150" width="1" height="1.3" fill="#569cd6" fill-opacity="0.64"/><rect x="963" y="150" width="1" height="1.3" fill="#569cd6" fill-opacity="0.64"/><rect x="964" y="150" width="1" height="1.3" fill="#569cd6" fill-opacity="0.64"/><rect x="965" y="150" width="1" height="1.3" fill="#569cd6" fill-opacity="0.64"/><rect x="966" y="150" width="1" height="1.3" fill="#569cd6" fill-opacity="0.64"/><rect x="967" y="150" width="1" height="1.3" fill="#179fff" fill-opacity="0.42"/><rect x="969" y="150" width="1" height="1.3" fill="#cccccc" fill-opacity="0.51"/><rect x="971" y="150" width="1" height="1.3" fill="#ce9178" fill-opacity="0.30"/><rect x="972" y="150" width="1" height="1.3" fill="#ce9178" fill-opacity="0.30"/><rect x="974" y="150" width="1" height="1.3" fill="#ce9178" fill-opacity="0.64"/><rect x="975" y="150" width="1" height="1.3" fill="#ce9178" fill-opacity="0.64"/><rect x="976" y="150" width="1" height="1.3" fill="#ce9178" fill-opacity="0.64"/><rect x="977" y="150" width="1" height="1.3" fill="#ce9178" fill-opacity="0.30"/><rect x="978" y="150" width="1" height="1.3" fill="#ce9178" fill-opacity="0.64"/><rect x="979" y="150" width="1" height="1.3" fill="#ce9178" fill-opacity="0.64"/><rect x="980" y="150" width="1" height="1.3" fill="#ce9178" fill-opacity="0.30"/><rect x="981" y="150" width="1" height="1.3" fill="#ce9178" fill-opacity="0.64"/><rect x="983" y="150" width="1" height="1.3" fill="#ce9178" fill-opacity="0.42"/><rect x="984" y="150" width="1" height="1.3" fill="#ce9178" fill-opacity="0.64"/><rect x="985" y="150" width="1" height="1.3" fill="#ce9178" fill-opacity="0.51"/><rect x="915" y="154" width="1" height="1.3" fill="#569cd6" fill-opacity="0.51"/><rect x="916" y="154" width="1" height="1.3" fill="#569cd6" fill-opacity="0.51"/><rect x="917" y="154" width="1" height="1.3" fill="#569cd6" fill-opacity="0.51"/><rect x="918" y="154" width="1" height="1.3" fill="#569cd6" fill-opacity="0.51"/><rect x="919" y="154" width="1" height="1.3" fill="#569cd6" fill-opacity="0.51"/><rect x="920" y="154" width="1" height="1.3" fill="#569cd6" fill-opacity="0.51"/><rect x="921" y="154" width="1" height="1.3" fill="#569cd6" fill-opacity="0.51"/><rect x="922" y="154" width="1" height="1.3" fill="#569cd6" fill-opacity="0.59"/><rect x="924" y="154" width="1" height="1.3" fill="#9cdcfe" fill-opacity="0.51"/><rect x="925" y="154" width="1" height="1.3" fill="#9cdcfe" fill-opacity="0.51"/><rect x="926" y="154" width="1" height="1.3" fill="#9cdcfe" fill-opacity="0.51"/><rect x="927" y="154" width="1" height="1.3" fill="#9cdcfe" fill-opacity="0.51"/><rect x="928" y="154" width="1" height="1.3" fill="#9cdcfe" fill-opacity="0.51"/><rect x="929" y="154" width="1" height="1.3" fill="#9cdcfe" fill-opacity="0.30"/><rect x="930" y="154" width="1" height="1.3" fill="#9cdcfe" fill-opacity="0.51"/><rect x="931" y="154" width="1" height="1.3" fill="#9cdcfe" fill-opacity="0.51"/><rect x="932" y="154" width="1" height="1.3" fill="#9cdcfe" fill-opacity="0.51"/><rect x="934" y="154" width="1" height="1.3" fill="#cccccc" fill-opacity="0.51"/><rect x="936" y="154" width="1" height="1.3" fill="#9cdcfe" fill-opacity="0.51"/><rect x="937" y="154" width="1" height="1.3" fill="#9cdcfe" fill-opacity="0.59"/><rect x="938" y="154" width="1" height="1.3" fill="#9cdcfe" fill-opacity="0.51"/><rect x="939" y="154" width="1" height="1.3" fill="#9cdcfe" fill-opacity="0.51"/><rect x="940" y="154" width="1" height="1.3" fill="#9cdcfe" fill-opacity="0.30"/><rect x="941" y="154" width="1" height="1.3" fill="#9cdcfe" fill-opacity="0.51"/><rect x="942" y="154" width="1" height="1.3" fill="#9cdcfe" fill-opacity="0.51"/><rect x="943" y="154" width="1" height="1.3" fill="#9cdcfe" fill-opacity="0.59"/><rect x="944" y="154" width="1" height="1.3" fill="#9cdcfe" fill-opacity="0.51"/><rect x="945" y="154" width="1" height="1.3" fill="#cccccc" fill-opacity="0.30"/><rect x="946" y="154" width="1" height="1.3" fill="#9cdcfe" fill-opacity="0.51"/><rect x="947" y="154" width="1" height="1.3" fill="#9cdcfe" fill-opacity="0.51"/><rect x="948" y="154" width="1" height="1.3" fill="#9cdcfe" fill-opacity="0.51"/><rect x="949" y="154" width="1" height="1.3" fill="#9cdcfe" fill-opacity="0.51"/><rect x="950" y="154" width="1" height="1.3" fill="#9cdcfe" fill-opacity="0.51"/><rect x="951" y="154" width="1" height="1.3" fill="#9cdcfe" fill-opacity="0.51"/><rect x="952" y="154" width="1" height="1.3" fill="#9cdcfe" fill-opacity="0.51"/><rect x="953" y="154" width="1" height="1.3" fill="#9cdcfe" fill-opacity="0.51"/><rect x="955" y="154" width="1" height="1.3" fill="#cccccc" fill-opacity="0.42"/><rect x="957" y="154" width="1" height="1.3" fill="#b5cea8" fill-opacity="0.64"/><rect x="958" y="154" width="1" height="1.3" fill="#b5cea8" fill-opacity="0.64"/><rect x="959" y="154" width="1" height="1.3" fill="#b5cea8" fill-opacity="0.64"/><rect x="960" y="154" width="1" height="1.3" fill="#cccccc" fill-opacity="0.30"/><rect x="915" y="156" width="1" height="1.3" fill="#569cd6" fill-opacity="0.51"/><rect x="916" y="156" width="1" height="1.3" fill="#569cd6" fill-opacity="0.51"/><rect x="917" y="156" width="1" height="1.3" fill="#569cd6" fill-opacity="0.51"/><rect x="918" y="156" width="1" height="1.3" fill="#569cd6" fill-opacity="0.51"/><rect x="919" y="156" width="1" height="1.3" fill="#569cd6" fill-opacity="0.51"/><rect x="920" y="156" width="1" height="1.3" fill="#569cd6" fill-opacity="0.51"/><rect x="921" y="156" width="1" height="1.3" fill="#569cd6" fill-opacity="0.51"/><rect x="922" y="156" width="1" height="1.3" fill="#569cd6" fill-opacity="0.59"/><rect x="924" y="156" width="1" height="1.3" fill="#9cdcfe" fill-opacity="0.51"/><rect x="925" y="156" width="1" height="1.3" fill="#9cdcfe" fill-opacity="0.51"/><rect x="926" y="156" width="1" height="1.3" fill="#9cdcfe" fill-opacity="0.51"/><rect x="927" y="156" width="1" height="1.3" fill="#9cdcfe" fill-opacity="0.51"/><rect x="928" y="156" width="1" height="1.3" fill="#9cdcfe" fill-opacity="0.51"/><rect x="929" y="156" width="1" height="1.3" fill="#9cdcfe" fill-opacity="0.30"/><rect x="930" y="156" width="1" height="1.3" fill="#9cdcfe" fill-opacity="0.51"/><rect x="931" y="156" width="1" height="1.3" fill="#9cdcfe" fill-opacity="0.51"/><rect x="932" y="156" width="1" height="1.3" fill="#9cdcfe" fill-opacity="0.51"/><rect x="934" y="156" width="1" height="1.3" fill="#cccccc" fill-opacity="0.51"/><rect x="936" y="156" width="1" height="1.3" fill="#9cdcfe" fill-opacity="0.51"/><rect x="937" y="156" width="1" height="1.3" fill="#9cdcfe" fill-opacity="0.59"/><rect x="938" y="156" width="1" height="1.3" fill="#9cdcfe" fill-opacity="0.51"/><rect x="939" y="156" width="1" height="1.3" fill="#9cdcfe" fill-opacity="0.51"/><rect x="940" y="156" width="1" height="1.3" fill="#9cdcfe" fill-opacity="0.30"/><rect x="941" y="156" width="1" height="1.3" fill="#9cdcfe" fill-opacity="0.51"/><rect x="942" y="156" width="1" height="1.3" fill="#9cdcfe" fill-opacity="0.51"/><rect x="943" y="156" width="1" height="1.3" fill="#9cdcfe" fill-opacity="0.59"/><rect x="944" y="156" width="1" height="1.3" fill="#9cdcfe" fill-opacity="0.51"/><rect x="945" y="156" width="1" height="1.3" fill="#cccccc" fill-opacity="0.30"/><rect x="946" y="156" width="1" height="1.3" fill="#9cdcfe" fill-opacity="0.51"/><rect x="947" y="156" width="1" height="1.3" fill="#9cdcfe" fill-opacity="0.51"/><rect x="948" y="156" width="1" height="1.3" fill="#9cdcfe" fill-opacity="0.51"/><rect x="949" y="156" width="1" height="1.3" fill="#9cdcfe" fill-opacity="0.51"/><rect x="950" y="156" width="1" height="1.3" fill="#9cdcfe" fill-opacity="0.51"/><rect x="951" y="156" width="1" height="1.3" fill="#9cdcfe" fill-opacity="0.51"/><rect x="952" y="156" width="1" height="1.3" fill="#9cdcfe" fill-opacity="0.51"/><rect x="953" y="156" width="1" height="1.3" fill="#9cdcfe" fill-opacity="0.51"/><rect x="955" y="156" width="1" height="1.3" fill="#cccccc" fill-opacity="0.64"/><rect x="957" y="156" width="1" height="1.3" fill="#b5cea8" fill-opacity="0.64"/><rect x="958" y="156" width="1" height="1.3" fill="#b5cea8" fill-opacity="0.64"/><rect x="959" y="156" width="1" height="1.3" fill="#b5cea8" fill-opacity="0.64"/><rect x="960" y="156" width="1" height="1.3" fill="#cccccc" fill-opacity="0.30"/><rect x="915" y="158" width="1" height="1.3" fill="#dcdcaa" fill-opacity="0.51"/><rect x="916" y="158" width="1" height="1.3" fill="#dcdcaa" fill-opacity="0.51"/><rect x="917" y="158" width="1" height="1.3" fill="#dcdcaa" fill-opacity="0.51"/><rect x="918" y="158" width="1" height="1.3" fill="#dcdcaa" fill-opacity="0.51"/><rect x="919" y="158" width="1" height="1.3" fill="#dcdcaa" fill-opacity="0.59"/><rect x="920" y="158" width="1" height="1.3" fill="#dcdcaa" fill-opacity="0.59"/><rect x="921" y="158" width="1" height="1.3" fill="#da70d6" fill-opacity="0.42"/><rect x="922" y="158" width="1" height="1.3" fill="#ce9178" fill-opacity="0.30"/><rect x="923" y="158" width="1" height="1.3" fill="#ce9178" fill-opacity="0.51"/><rect x="924" y="158" width="1" height="1.3" fill="#ce9178" fill-opacity="0.51"/><rect x="925" y="158" width="1" height="1.3" fill="#ce9178" fill-opacity="0.59"/><rect x="926" y="158" width="1" height="1.3" fill="#ce9178" fill-opacity="0.51"/><rect x="927" y="158" width="1" height="1.3" fill="#ce9178" fill-opacity="0.51"/><rect x="928" y="158" width="1" height="1.3" fill="#ce9178" fill-opacity="0.51"/><rect x="929" y="158" width="1" height="1.3" fill="#ce9178" fill-opacity="0.51"/><rect x="931" y="158" width="1" height="1.3" fill="#ce9178" fill-opacity="0.51"/><rect x="932" y="158" width="1" height="1.3" fill="#ce9178" fill-opacity="0.51"/><rect x="933" y="158" width="1" height="1.3" fill="#ce9178" fill-opacity="0.51"/><rect x="934" y="158" width="1" height="1.3" fill="#ce9178" fill-opacity="0.51"/><rect x="935" y="158" width="1" height="1.3" fill="#ce9178" fill-opacity="0.51"/><rect x="936" y="158" width="1" height="1.3" fill="#ce9178" fill-opacity="0.51"/><rect x="937" y="158" width="1" height="1.3" fill="#ce9178" fill-opacity="0.51"/><rect x="938" y="158" width="1" height="1.3" fill="#ce9178" fill-opacity="0.51"/><rect x="940" y="158" width="1" height="1.3" fill="#ce9178" fill-opacity="0.51"/><rect x="941" y="158" width="1" height="1.3" fill="#ce9178" fill-opacity="0.64"/><rect x="942" y="158" width="1" height="1.3" fill="#ce9178" fill-opacity="0.59"/><rect x="943" y="158" width="1" height="1.3" fill="#ce9178" fill-opacity="0.30"/><rect x="944" y="158" width="1" height="1.3" fill="#ce9178" fill-opacity="0.64"/><rect x="945" y="158" width="1" height="1.3" fill="#ce9178" fill-opacity="0.59"/><rect x="946" y="158" width="1" height="1.3" fill="#ce9178" fill-opacity="0.30"/><rect x="948" y="158" width="1" height="1.3" fill="#ce9178" fill-opacity="0.30"/><rect x="949" y="158" width="1" height="1.3" fill="#cccccc" fill-opacity="0.30"/><rect x="951" y="158" width="1" height="1.3" fill="#9cdcfe" fill-opacity="0.51"/><rect x="952" y="158" width="1" height="1.3" fill="#9cdcfe" fill-opacity="0.51"/><rect x="953" y="158" width="1" height="1.3" fill="#9cdcfe" fill-opacity="0.51"/><rect x="954" y="158" width="1" height="1.3" fill="#9cdcfe" fill-opacity="0.51"/><rect x="955" y="158" width="1" height="1.3" fill="#9cdcfe" fill-opacity="0.51"/><rect x="956" y="158" width="1" height="1.3" fill="#9cdcfe" fill-opacity="0.30"/><rect x="957" y="158" width="1" height="1.3" fill="#9cdcfe" fill-opacity="0.51"/><rect x="958" y="158" width="1" height="1.3" fill="#9cdcfe" fill-opacity="0.51"/><rect x="959" y="158" width="1" height="1.3" fill="#9cdcfe" fill-opacity="0.51"/><rect x="960" y="158" width="1" height="1.3" fill="#cccccc" fill-opacity="0.30"/><rect x="962" y="158" width="1" height="1.3" fill="#9cdcfe" fill-opacity="0.51"/><rect x="963" y="158" width="1" height="1.3" fill="#9cdcfe" fill-opacity="0.51"/><rect x="964" y="158" width="1" height="1.3" fill="#9cdcfe" fill-opacity="0.51"/><rect x="965" y="158" width="1" height="1.3" fill="#9cdcfe" fill-opacity="0.51"/><rect x="966" y="158" width="1" height="1.3" fill="#9cdcfe" fill-opacity="0.51"/><rect x="967" y="158" width="1" height="1.3" fill="#9cdcfe" fill-opacity="0.30"/><rect x="968" y="158" width="1" height="1.3" fill="#9cdcfe" fill-opacity="0.51"/><rect x="969" y="158" width="1" height="1.3" fill="#9cdcfe" fill-opacity="0.51"/><rect x="970" y="158" width="1" height="1.3" fill="#9cdcfe" fill-opacity="0.51"/><rect x="971" y="158" width="1" height="1.3" fill="#da70d6" fill-opacity="0.42"/><rect x="972" y="158" width="1" height="1.3" fill="#cccccc" fill-opacity="0.30"/><rect x="915" y="160" width="1" height="1.3" fill="#c586c0" fill-opacity="0.51"/><rect x="916" y="160" width="1" height="1.3" fill="#c586c0" fill-opacity="0.59"/><rect x="917" y="160" width="1" height="1.3" fill="#da70d6" fill-opacity="0.42"/><rect x="918" y="160" width="1" height="1.3" fill="#dcdcaa" fill-opacity="0.51"/><rect x="919" y="160" width="1" height="1.3" fill="#dcdcaa" fill-opacity="0.51"/><rect x="920" y="160" width="1" height="1.3" fill="#dcdcaa" fill-opacity="0.51"/><rect x="921" y="160" width="1" height="1.3" fill="#dcdcaa" fill-opacity="0.30"/><rect x="922" y="160" width="1" height="1.3" fill="#dcdcaa" fill-opacity="0.59"/><rect x="923" y="160" width="1" height="1.3" fill="#dcdcaa" fill-opacity="0.59"/><rect x="924" y="160" width="1" height="1.3" fill="#dcdcaa" fill-opacity="0.51"/><rect x="925" y="160" width="1" height="1.3" fill="#dcdcaa" fill-opacity="0.51"/><rect x="926" y="160" width="1" height="1.3" fill="#dcdcaa" fill-opacity="0.59"/><rect x="927" y="160" width="1" height="1.3" fill="#dcdcaa" fill-opacity="0.30"/><rect x="928" y="160" width="1" height="1.3" fill="#dcdcaa" fill-opacity="0.51"/><rect x="929" y="160" width="1" height="1.3" fill="#dcdcaa" fill-opacity="0.51"/><rect x="930" y="160" width="1" height="1.3" fill="#dcdcaa" fill-opacity="0.59"/><rect x="931" y="160" width="1" height="1.3" fill="#dcdcaa" fill-opacity="0.30"/><rect x="932" y="160" width="1" height="1.3" fill="#dcdcaa" fill-opacity="0.51"/><rect x="933" y="160" width="1" height="1.3" fill="#dcdcaa" fill-opacity="0.51"/><rect x="934" y="160" width="1" height="1.3" fill="#dcdcaa" fill-opacity="0.51"/><rect x="935" y="160" width="1" height="1.3" fill="#dcdcaa" fill-opacity="0.51"/><rect x="936" y="160" width="1" height="1.3" fill="#179fff" fill-opacity="0.42"/><rect x="937" y="160" width="1" height="1.3" fill="#569cd6" fill-opacity="0.64"/><rect x="938" y="160" width="1" height="1.3" fill="#569cd6" fill-opacity="0.64"/><rect x="939" y="160" width="1" height="1.3" fill="#569cd6" fill-opacity="0.64"/><rect x="940" y="160" width="1" height="1.3" fill="#569cd6" fill-opacity="0.64"/><rect x="941" y="160" width="1" height="1.3" fill="#cccccc" fill-opacity="0.30"/><rect x="943" y="160" width="1" height="1.3" fill="#cccccc" fill-opacity="0.64"/><rect x="944" y="160" width="1" height="1.3" fill="#9cdcfe" fill-opacity="0.59"/><rect x="945" y="160" width="1" height="1.3" fill="#9cdcfe" fill-opacity="0.59"/><rect x="946" y="160" width="1" height="1.3" fill="#9cdcfe" fill-opacity="0.51"/><rect x="947" y="160" width="1" height="1.3" fill="#9cdcfe" fill-opacity="0.51"/><rect x="948" y="160" width="1" height="1.3" fill="#9cdcfe" fill-opacity="0.59"/><rect x="949" y="160" width="1" height="1.3" fill="#9cdcfe" fill-opacity="0.30"/><rect x="950" y="160" width="1" height="1.3" fill="#9cdcfe" fill-opacity="0.51"/><rect x="951" y="160" width="1" height="1.3" fill="#9cdcfe" fill-opacity="0.51"/><rect x="952" y="160" width="1" height="1.3" fill="#9cdcfe" fill-opacity="0.51"/><rect x="953" y="160" width="1" height="1.3" fill="#9cdcfe" fill-opacity="0.51"/><rect x="954" y="160" width="1" height="1.3" fill="#179fff" fill-opacity="0.42"/><rect x="956" y="160" width="1" height="1.3" fill="#cccccc" fill-opacity="0.42"/><rect x="957" y="160" width="1" height="1.3" fill="#cccccc" fill-opacity="0.51"/><rect x="959" y="160" width="1" height="1.3" fill="#569cd6" fill-opacity="0.64"/><rect x="960" y="160" width="1" height="1.3" fill="#569cd6" fill-opacity="0.64"/><rect x="961" y="160" width="1" height="1.3" fill="#569cd6" fill-opacity="0.64"/><rect x="962" y="160" width="1" height="1.3" fill="#569cd6" fill-opacity="0.30"/><rect x="963" y="160" width="1" height="1.3" fill="#569cd6" fill-opacity="0.64"/><rect x="964" y="160" width="1" height="1.3" fill="#569cd6" fill-opacity="0.64"/><rect x="965" y="160" width="1" height="1.3" fill="#da70d6" fill-opacity="0.42"/><rect x="967" y="160" width="1" height="1.3" fill="#da70d6" fill-opacity="0.42"/><rect x="919" y="162" width="1" height="1.3" fill="#dcdcaa" fill-opacity="0.51"/><rect x="920" y="162" width="1" height="1.3" fill="#dcdcaa" fill-opacity="0.51"/><rect x="921" y="162" width="1" height="1.3" fill="#dcdcaa" fill-opacity="0.51"/><rect x="922" y="162" width="1" height="1.3" fill="#dcdcaa" fill-opacity="0.51"/><rect x="923" y="162" width="1" height="1.3" fill="#dcdcaa" fill-opacity="0.59"/><rect x="924" y="162" width="1" height="1.3" fill="#dcdcaa" fill-opacity="0.59"/><rect x="925" y="162" width="1" height="1.3" fill="#179fff" fill-opacity="0.42"/><rect x="926" y="162" width="1" height="1.3" fill="#ce9178" fill-opacity="0.30"/><rect x="927" y="162" width="1" height="1.3" fill="#ce9178" fill-opacity="0.64"/><rect x="928" y="162" width="1" height="1.3" fill="#ce9178" fill-opacity="0.51"/><rect x="929" y="162" width="1" height="1.3" fill="#ce9178" fill-opacity="0.59"/><rect x="931" y="162" width="1" height="1.3" fill="#ce9178" fill-opacity="0.59"/><rect x="932" y="162" width="1" height="1.3" fill="#ce9178" fill-opacity="0.59"/><rect x="933" y="162" width="1" height="1.3" fill="#ce9178" fill-opacity="0.51"/><rect x="934" y="162" width="1" height="1.3" fill="#ce9178" fill-opacity="0.51"/><rect x="935" y="162" width="1" height="1.3" fill="#ce9178" fill-opacity="0.59"/><rect x="937" y="162" width="1" height="1.3" fill="#ce9178" fill-opacity="0.51"/><rect x="938" y="162" width="1" height="1.3" fill="#ce9178" fill-opacity="0.51"/><rect x="939" y="162" width="1" height="1.3" fill="#ce9178" fill-opacity="0.51"/><rect x="940" y="162" width="1" height="1.3" fill="#ce9178" fill-opacity="0.51"/><rect x="942" y="162" width="1" height="1.3" fill="#ce9178" fill-opacity="0.59"/><rect x="943" y="162" width="1" height="1.3" fill="#ce9178" fill-opacity="0.51"/><rect x="944" y="162" width="1" height="1.3" fill="#ce9178" fill-opacity="0.51"/><rect x="945" y="162" width="1" height="1.3" fill="#ce9178" fill-opacity="0.59"/><rect x="946" y="162" width="1" height="1.3" fill="#ce9178" fill-opacity="0.51"/><rect x="947" y="162" width="1" height="1.3" fill="#ce9178" fill-opacity="0.59"/><rect x="948" y="162" width="1" height="1.3" fill="#ce9178" fill-opacity="0.30"/><rect x="949" y="162" width="1" height="1.3" fill="#179fff" fill-opacity="0.42"/><rect x="950" y="162" width="1" height="1.3" fill="#cccccc" fill-opacity="0.30"/><rect x="919" y="164" width="1" height="1.3" fill="#c586c0" fill-opacity="0.51"/><rect x="920" y="164" width="1" height="1.3" fill="#c586c0" fill-opacity="0.51"/><rect x="921" y="164" width="1" height="1.3" fill="#c586c0" fill-opacity="0.59"/><rect x="922" y="164" width="1" height="1.3" fill="#c586c0" fill-opacity="0.51"/><rect x="923" y="164" width="1" height="1.3" fill="#c586c0" fill-opacity="0.51"/><rect x="924" y="164" width="1" height="1.3" fill="#c586c0" fill-opacity="0.51"/><rect x="925" y="164" width="1" height="1.3" fill="#cccccc" fill-opacity="0.30"/><rect x="915" y="166" width="1" height="1.3" fill="#da70d6" fill-opacity="0.42"/><rect x="915" y="170" width="1" height="1.3" fill="#dcdcaa" fill-opacity="0.51"/><rect x="916" y="170" width="1" height="1.3" fill="#dcdcaa" fill-opacity="0.51"/><rect x="917" y="170" width="1" height="1.3" fill="#dcdcaa" fill-opacity="0.51"/><rect x="918" y="170" width="1" height="1.3" fill="#dcdcaa" fill-opacity="0.51"/><rect x="919" y="170" width="1" height="1.3" fill="#dcdcaa" fill-opacity="0.59"/><rect x="920" y="170" width="1" height="1.3" fill="#dcdcaa" fill-opacity="0.59"/><rect x="921" y="170" width="1" height="1.3" fill="#da70d6" fill-opacity="0.42"/><rect x="922" y="170" width="1" height="1.3" fill="#ce9178" fill-opacity="0.30"/><rect x="923" y="170" width="1" height="1.3" fill="#ce9178" fill-opacity="0.64"/><rect x="924" y="170" width="1" height="1.3" fill="#ce9178" fill-opacity="0.30"/><rect x="926" y="170" width="1" height="1.3" fill="#569cd6" fill-opacity="0.64"/><rect x="927" y="170" width="1" height="1.3" fill="#569cd6" fill-opacity="0.64"/><rect x="928" y="170" width="1" height="1.3" fill="#569cd6" fill-opacity="0.64"/><rect x="929" y="170" width="1" height="1.3" fill="#569cd6" fill-opacity="0.51"/><rect x="930" y="170" width="1" height="1.3" fill="#569cd6" fill-opacity="0.64"/><rect x="931" y="170" width="1" height="1.3" fill="#569cd6" fill-opacity="0.64"/><rect x="933" y="170" width="1" height="1.3" fill="#ce9178" fill-opacity="0.30"/><rect x="934" y="170" width="1" height="1.3" fill="#ce9178" fill-opacity="0.64"/><rect x="935" y="170" width="1" height="1.3" fill="#ce9178" fill-opacity="0.64"/><rect x="937" y="170" width="1" height="1.3" fill="#ce9178" fill-opacity="0.64"/><rect x="938" y="170" width="1" height="1.3" fill="#ce9178" fill-opacity="0.51"/><rect x="940" y="170" width="1" height="1.3" fill="#ce9178" fill-opacity="0.59"/><rect x="941" y="170" width="1" height="1.3" fill="#ce9178" fill-opacity="0.59"/><rect x="942" y="170" width="1" height="1.3" fill="#ce9178" fill-opacity="0.51"/><rect x="943" y="170" width="1" height="1.3" fill="#ce9178" fill-opacity="0.51"/><rect x="944" y="170" width="1" height="1.3" fill="#ce9178" fill-opacity="0.59"/><rect x="945" y="170" width="1" height="1.3" fill="#ce9178" fill-opacity="0.42"/><rect x="946" y="170" width="1" height="1.3" fill="#ce9178" fill-opacity="0.51"/><rect x="947" y="170" width="1" height="1.3" fill="#ce9178" fill-opacity="0.30"/><rect x="948" y="170" width="1" height="1.3" fill="#cccccc" fill-opacity="0.30"/><rect x="950" y="170" width="1" height="1.3" fill="#9cdcfe" fill-opacity="0.59"/><rect x="951" y="170" width="1" height="1.3" fill="#9cdcfe" fill-opacity="0.59"/><rect x="952" y="170" width="1" height="1.3" fill="#9cdcfe" fill-opacity="0.51"/><rect x="953" y="170" width="1" height="1.3" fill="#9cdcfe" fill-opacity="0.51"/><rect x="954" y="170" width="1" height="1.3" fill="#9cdcfe" fill-opacity="0.59"/><rect x="955" y="170" width="1" height="1.3" fill="#9cdcfe" fill-opacity="0.30"/><rect x="956" y="170" width="1" height="1.3" fill="#9cdcfe" fill-opacity="0.51"/><rect x="957" y="170" width="1" height="1.3" fill="#9cdcfe" fill-opacity="0.51"/><rect x="958" y="170" width="1" height="1.3" fill="#9cdcfe" fill-opacity="0.51"/><rect x="959" y="170" width="1" height="1.3" fill="#9cdcfe" fill-opacity="0.51"/><rect x="961" y="170" width="1" height="1.3" fill="#cccccc" fill-opacity="0.42"/><rect x="963" y="170" width="1" height="1.3" fill="#179fff" fill-opacity="0.42"/><rect x="964" y="170" width="1" height="1.3" fill="#4ec9b0" fill-opacity="0.51"/><rect x="965" y="170" width="1" height="1.3" fill="#4ec9b0" fill-opacity="0.51"/><rect x="966" y="170" width="1" height="1.3" fill="#4ec9b0" fill-opacity="0.51"/><rect x="967" y="170" width="1" height="1.3" fill="#4ec9b0" fill-opacity="0.59"/><rect x="968" y="170" width="1" height="1.3" fill="#4ec9b0" fill-opacity="0.64"/><rect x="969" y="170" width="1" height="1.3" fill="#4ec9b0" fill-opacity="0.64"/><rect x="970" y="170" width="1" height="1.3" fill="#4ec9b0" fill-opacity="0.30"/><rect x="971" y="170" width="1" height="1.3" fill="#4ec9b0" fill-opacity="0.59"/><rect x="972" y="170" width="1" height="1.3" fill="#179fff" fill-opacity="0.42"/><rect x="973" y="170" width="1" height="1.3" fill="#179fff" fill-opacity="0.42"/><rect x="974" y="170" width="1" height="1.3" fill="#b5cea8" fill-opacity="0.64"/><rect x="975" y="170" width="1" height="1.3" fill="#b5cea8" fill-opacity="0.64"/><rect x="976" y="170" width="1" height="1.3" fill="#b5cea8" fill-opacity="0.64"/><rect x="977" y="170" width="1" height="1.3" fill="#b5cea8" fill-opacity="0.64"/><rect x="979" y="170" width="1" height="1.3" fill="#cccccc" fill-opacity="0.64"/><rect x="981" y="170" width="1" height="1.3" fill="#b5cea8" fill-opacity="0.64"/><rect x="982" y="170" width="1" height="1.3" fill="#b5cea8" fill-opacity="0.64"/><rect x="983" y="170" width="1" height="1.3" fill="#b5cea8" fill-opacity="0.64"/><rect x="984" y="170" width="1" height="1.3" fill="#b5cea8" fill-opacity="0.64"/><rect x="985" y="170" width="1" height="1.3" fill="#179fff" fill-opacity="0.42"/><rect x="922" y="172" width="1" height="1.3" fill="#179fff" fill-opacity="0.42"/><rect x="923" y="172" width="1" height="1.3" fill="#9cdcfe" fill-opacity="0.51"/><rect x="924" y="172" width="1" height="1.3" fill="#9cdcfe" fill-opacity="0.59"/><rect x="925" y="172" width="1" height="1.3" fill="#9cdcfe" fill-opacity="0.51"/><rect x="926" y="172" width="1" height="1.3" fill="#9cdcfe" fill-opacity="0.51"/><rect x="927" y="172" width="1" height="1.3" fill="#9cdcfe" fill-opacity="0.30"/><rect x="928" y="172" width="1" height="1.3" fill="#9cdcfe" fill-opacity="0.51"/><rect x="929" y="172" width="1" height="1.3" fill="#9cdcfe" fill-opacity="0.51"/><rect x="930" y="172" width="1" height="1.3" fill="#9cdcfe" fill-opacity="0.59"/><rect x="931" y="172" width="1" height="1.3" fill="#9cdcfe" fill-opacity="0.51"/><rect x="932" y="172" width="1" height="1.3" fill="#cccccc" fill-opacity="0.30"/><rect x="933" y="172" width="1" height="1.3" fill="#9cdcfe" fill-opacity="0.59"/><rect x="934" y="172" width="1" height="1.3" fill="#9cdcfe" fill-opacity="0.51"/><rect x="935" y="172" width="1" height="1.3" fill="#9cdcfe" fill-opacity="0.51"/><rect x="936" y="172" width="1" height="1.3" fill="#9cdcfe" fill-opacity="0.59"/><rect x="937" y="172" width="1" height="1.3" fill="#9cdcfe" fill-opacity="0.51"/><rect x="938" y="172" width="1" height="1.3" fill="#9cdcfe" fill-opacity="0.51"/><rect x="939" y="172" width="1" height="1.3" fill="#9cdcfe" fill-opacity="0.51"/><rect x="940" y="172" width="1" height="1.3" fill="#9cdcfe" fill-opacity="0.51"/><rect x="942" y="172" width="1" height="1.3" fill="#cccccc" fill-opacity="0.64"/><rect x="944" y="172" width="1" height="1.3" fill="#569cd6" fill-opacity="0.64"/><rect x="945" y="172" width="1" height="1.3" fill="#569cd6" fill-opacity="0.64"/><rect x="946" y="172" width="1" height="1.3" fill="#569cd6" fill-opacity="0.64"/><rect x="947" y="172" width="1" height="1.3" fill="#569cd6" fill-opacity="0.64"/><rect x="948" y="172" width="1" height="1.3" fill="#569cd6" fill-opacity="0.30"/><rect x="949" y="172" width="1" height="1.3" fill="#569cd6" fill-opacity="0.64"/><rect x="950" y="172" width="1" height="1.3" fill="#569cd6" fill-opacity="0.64"/><rect x="951" y="172" width="1" height="1.3" fill="#569cd6" fill-opacity="0.64"/><rect x="952" y="172" width="1" height="1.3" fill="#569cd6" fill-opacity="0.64"/><rect x="953" y="172" width="1" height="1.3" fill="#569cd6" fill-opacity="0.64"/><rect x="954" y="172" width="1" height="1.3" fill="#569cd6" fill-opacity="0.64"/><rect x="955" y="172" width="1" height="1.3" fill="#569cd6" fill-opacity="0.64"/><rect x="956" y="172" width="1" height="1.3" fill="#569cd6" fill-opacity="0.30"/><rect x="957" y="172" width="1" height="1.3" fill="#569cd6" fill-opacity="0.64"/><rect x="958" y="172" width="1" height="1.3" fill="#569cd6" fill-opacity="0.64"/><rect x="959" y="172" width="1" height="1.3" fill="#569cd6" fill-opacity="0.64"/><rect x="960" y="172" width="1" height="1.3" fill="#569cd6" fill-opacity="0.30"/><rect x="961" y="172" width="1" height="1.3" fill="#569cd6" fill-opacity="0.64"/><rect x="962" y="172" width="1" height="1.3" fill="#569cd6" fill-opacity="0.64"/><rect x="963" y="172" width="1" height="1.3" fill="#569cd6" fill-opacity="0.64"/><rect x="964" y="172" width="1" height="1.3" fill="#569cd6" fill-opacity="0.64"/><rect x="965" y="172" width="1" height="1.3" fill="#569cd6" fill-opacity="0.64"/><rect x="966" y="172" width="1" height="1.3" fill="#179fff" fill-opacity="0.42"/><rect x="968" y="172" width="1" height="1.3" fill="#cccccc" fill-opacity="0.51"/><rect x="970" y="172" width="1" height="1.3" fill="#ce9178" fill-opacity="0.30"/><rect x="971" y="172" width="1" height="1.3" fill="#ce9178" fill-opacity="0.51"/><rect x="972" y="172" width="1" height="1.3" fill="#ce9178" fill-opacity="0.51"/><rect x="973" y="172" width="1" height="1.3" fill="#ce9178" fill-opacity="0.59"/><rect x="974" y="172" width="1" height="1.3" fill="#ce9178" fill-opacity="0.51"/><rect x="975" y="172" width="1" height="1.3" fill="#ce9178" fill-opacity="0.59"/><rect x="976" y="172" width="1" height="1.3" fill="#ce9178" fill-opacity="0.59"/><rect x="977" y="172" width="1" height="1.3" fill="#ce9178" fill-opacity="0.51"/><rect x="978" y="172" width="1" height="1.3" fill="#ce9178" fill-opacity="0.59"/><rect x="979" y="172" width="1" height="1.3" fill="#ce9178" fill-opacity="0.30"/><rect x="981" y="172" width="1" height="1.3" fill="#cccccc" fill-opacity="0.30"/><rect x="983" y="172" width="1" height="1.3" fill="#ce9178" fill-opacity="0.30"/><rect x="984" y="172" width="1" height="1.3" fill="#ce9178" fill-opacity="0.51"/><rect x="985" y="172" width="1" height="1.3" fill="#ce9178" fill-opacity="0.51"/><rect x="915" y="176" width="1" height="1.3" fill="#dcdcaa" fill-opacity="0.51"/><rect x="916" y="176" width="1" height="1.3" fill="#dcdcaa" fill-opacity="0.51"/><rect x="917" y="176" width="1" height="1.3" fill="#dcdcaa" fill-opacity="0.51"/><rect x="918" y="176" width="1" height="1.3" fill="#dcdcaa" fill-opacity="0.51"/><rect x="919" y="176" width="1" height="1.3" fill="#dcdcaa" fill-opacity="0.59"/><rect x="920" y="176" width="1" height="1.3" fill="#dcdcaa" fill-opacity="0.59"/><rect x="921" y="176" width="1" height="1.3" fill="#da70d6" fill-opacity="0.42"/><rect x="922" y="176" width="1" height="1.3" fill="#ce9178" fill-opacity="0.30"/><rect x="923" y="176" width="1" height="1.3" fill="#ce9178" fill-opacity="0.64"/><rect x="924" y="176" width="1" height="1.3" fill="#ce9178" fill-opacity="0.51"/><rect x="925" y="176" width="1" height="1.3" fill="#ce9178" fill-opacity="0.51"/><rect x="926" y="176" width="1" height="1.3" fill="#ce9178" fill-opacity="0.51"/><rect x="927" y="176" width="1" height="1.3" fill="#ce9178" fill-opacity="0.51"/><rect x="928" y="176" width="1" height="1.3" fill="#ce9178" fill-opacity="0.51"/><rect x="929" y="176" width="1" height="1.3" fill="#ce9178" fill-opacity="0.51"/><rect x="931" y="176" width="1" height="1.3" fill="#ce9178" fill-opacity="0.59"/><rect x="932" y="176" width="1" height="1.3" fill="#ce9178" fill-opacity="0.51"/><rect x="933" y="176" width="1" height="1.3" fill="#ce9178" fill-opacity="0.51"/><rect x="934" y="176" width="1" height="1.3" fill="#ce9178" fill-opacity="0.51"/><rect x="936" y="176" width="1" height="1.3" fill="#ce9178" fill-opacity="0.59"/><rect x="937" y="176" width="1" height="1.3" fill="#ce9178" fill-opacity="0.51"/><rect x="938" y="176" width="1" height="1.3" fill="#ce9178" fill-opacity="0.51"/><rect x="939" y="176" width="1" height="1.3" fill="#ce9178" fill-opacity="0.51"/><rect x="941" y="176" width="1" height="1.3" fill="#ce9178" fill-opacity="0.51"/><rect x="942" y="176" width="1" height="1.3" fill="#ce9178" fill-opacity="0.51"/><rect x="943" y="176" width="1" height="1.3" fill="#ce9178" fill-opacity="0.51"/><rect x="944" y="176" width="1" height="1.3" fill="#ce9178" fill-opacity="0.51"/><rect x="945" y="176" width="1" height="1.3" fill="#ce9178" fill-opacity="0.30"/><rect x="947" y="176" width="1" height="1.3" fill="#ce9178" fill-opacity="0.64"/><rect x="948" y="176" width="1" height="1.3" fill="#ce9178" fill-opacity="0.30"/><rect x="950" y="176" width="1" height="1.3" fill="#569cd6" fill-opacity="0.64"/><rect x="951" y="176" width="1" height="1.3" fill="#569cd6" fill-opacity="0.64"/><rect x="952" y="176" width="1" height="1.3" fill="#569cd6" fill-opacity="0.64"/><rect x="953" y="176" width="1" height="1.3" fill="#569cd6" fill-opacity="0.51"/><rect x="954" y="176" width="1" height="1.3" fill="#569cd6" fill-opacity="0.64"/><rect x="955" y="176" width="1" height="1.3" fill="#569cd6" fill-opacity="0.64"/><rect x="956" y="176" width="1" height="1.3" fill="#ce9178" fill-opacity="0.30"/><rect x="958" y="176" width="1" height="1.3" fill="#ce9178" fill-opacity="0.59"/><rect x="959" y="176" width="1" height="1.3" fill="#ce9178" fill-opacity="0.51"/><rect x="960" y="176" width="1" height="1.3" fill="#ce9178" fill-opacity="0.59"/><rect x="961" y="176" width="1" height="1.3" fill="#ce9178" fill-opacity="0.51"/><rect x="962" y="176" width="1" height="1.3" fill="#ce9178" fill-opacity="0.51"/><rect x="963" y="176" width="1" height="1.3" fill="#ce9178" fill-opacity="0.42"/><rect x="964" y="176" width="1" height="1.3" fill="#ce9178" fill-opacity="0.51"/><rect x="965" y="176" width="1" height="1.3" fill="#ce9178" fill-opacity="0.30"/><rect x="966" y="176" width="1" height="1.3" fill="#cccccc" fill-opacity="0.30"/><rect x="968" y="176" width="1" height="1.3" fill="#dcdcaa" fill-opacity="0.51"/><rect x="969" y="176" width="1" height="1.3" fill="#dcdcaa" fill-opacity="0.51"/><rect x="970" y="176" width="1" height="1.3" fill="#dcdcaa" fill-opacity="0.51"/><rect x="971" y="176" width="1" height="1.3" fill="#dcdcaa" fill-opacity="0.30"/><rect x="972" y="176" width="1" height="1.3" fill="#dcdcaa" fill-opacity="0.51"/><rect x="973" y="176" width="1" height="1.3" fill="#dcdcaa" fill-opacity="0.51"/><rect x="974" y="176" width="1" height="1.3" fill="#dcdcaa" fill-opacity="0.59"/><rect x="975" y="176" width="1" height="1.3" fill="#dcdcaa" fill-opacity="0.30"/><rect x="976" y="176" width="1" height="1.3" fill="#dcdcaa" fill-opacity="0.51"/><rect x="977" y="176" width="1" height="1.3" fill="#dcdcaa" fill-opacity="0.51"/><rect x="978" y="176" width="1" height="1.3" fill="#dcdcaa" fill-opacity="0.51"/><rect x="979" y="176" width="1" height="1.3" fill="#dcdcaa" fill-opacity="0.51"/><rect x="980" y="176" width="1" height="1.3" fill="#dcdcaa" fill-opacity="0.51"/><rect x="981" y="176" width="1" height="1.3" fill="#dcdcaa" fill-opacity="0.51"/><rect x="982" y="176" width="1" height="1.3" fill="#dcdcaa" fill-opacity="0.51"/><rect x="983" y="176" width="1" height="1.3" fill="#dcdcaa" fill-opacity="0.30"/><rect x="984" y="176" width="1" height="1.3" fill="#dcdcaa" fill-opacity="0.59"/><rect x="985" y="176" width="1" height="1.3" fill="#dcdcaa" fill-opacity="0.51"/><rect x="915" y="180" width="1" height="1.3" fill="#c586c0" fill-opacity="0.59"/><rect x="916" y="180" width="1" height="1.3" fill="#c586c0" fill-opacity="0.51"/><rect x="917" y="180" width="1" height="1.3" fill="#c586c0" fill-opacity="0.51"/><rect x="919" y="180" width="1" height="1.3" fill="#da70d6" fill-opacity="0.42"/><rect x="920" y="180" width="1" height="1.3" fill="#569cd6" fill-opacity="0.51"/><rect x="921" y="180" width="1" height="1.3" fill="#569cd6" fill-opacity="0.51"/><rect x="922" y="180" width="1" height="1.3" fill="#569cd6" fill-opacity="0.59"/><rect x="924" y="180" width="1" height="1.3" fill="#9cdcfe" fill-opacity="0.51"/><rect x="926" y="180" width="1" height="1.3" fill="#cccccc" fill-opacity="0.51"/><rect x="928" y="180" width="1" height="1.3" fill="#b5cea8" fill-opacity="0.64"/><rect x="929" y="180" width="1" height="1.3" fill="#b5cea8" fill-opacity="0.64"/><rect x="930" y="180" width="1" height="1.3" fill="#cccccc" fill-opacity="0.30"/><rect x="932" y="180" width="1" height="1.3" fill="#9cdcfe" fill-opacity="0.51"/><rect x="934" y="180" width="1" height="1.3" fill="#cccccc" fill-opacity="0.42"/><rect x="935" y="180" width="1" height="1.3" fill="#cccccc" fill-opacity="0.51"/><rect x="937" y="180" width="1" height="1.3" fill="#b5cea8" fill-opacity="0.64"/><rect x="938" y="180" width="1" height="1.3" fill="#cccccc" fill-opacity="0.30"/><rect x="940" y="180" width="1" height="1.3" fill="#9cdcfe" fill-opacity="0.51"/><rect x="941" y="180" width="1" height="1.3" fill="#cccccc" fill-opacity="0.30"/><rect x="942" y="180" width="1" height="1.3" fill="#cccccc" fill-opacity="0.30"/><rect x="943" y="180" width="1" height="1.3" fill="#da70d6" fill-opacity="0.42"/><rect x="945" y="180" width="1" height="1.3" fill="#da70d6" fill-opacity="0.42"/><rect x="919" y="182" width="1" height="1.3" fill="#dcdcaa" fill-opacity="0.51"/><rect x="920" y="182" width="1" height="1.3" fill="#dcdcaa" fill-opacity="0.51"/><rect x="921" y="182" width="1" height="1.3" fill="#dcdcaa" fill-opacity="0.51"/><rect x="922" y="182" width="1" height="1.3" fill="#dcdcaa" fill-opacity="0.51"/><rect x="923" y="182" width="1" height="1.3" fill="#dcdcaa" fill-opacity="0.59"/><rect x="924" y="182" width="1" height="1.3" fill="#dcdcaa" fill-opacity="0.59"/><rect x="925" y="182" width="1" height="1.3" fill="#179fff" fill-opacity="0.42"/><rect x="926" y="182" width="1" height="1.3" fill="#ce9178" fill-opacity="0.30"/><rect x="927" y="182" width="1" height="1.3" fill="#ce9178" fill-opacity="0.64"/><rect x="928" y="182" width="1" height="1.3" fill="#ce9178" fill-opacity="0.51"/><rect x="929" y="182" width="1" height="1.3" fill="#ce9178" fill-opacity="0.51"/><rect x="930" y="182" width="1" height="1.3" fill="#ce9178" fill-opacity="0.59"/><rect x="931" y="182" width="1" height="1.3" fill="#ce9178" fill-opacity="0.51"/><rect x="932" y="182" width="1" height="1.3" fill="#ce9178" fill-opacity="0.51"/><rect x="933" y="182" width="1" height="1.3" fill="#ce9178" fill-opacity="0.59"/><rect x="934" y="182" width="1" height="1.3" fill="#ce9178" fill-opacity="0.51"/><rect x="935" y="182" width="1" height="1.3" fill="#ce9178" fill-opacity="0.51"/><rect x="936" y="182" width="1" height="1.3" fill="#ce9178" fill-opacity="0.51"/><rect x="938" y="182" width="1" height="1.3" fill="#ce9178" fill-opacity="0.51"/><rect x="939" y="182" width="1" height="1.3" fill="#ce9178" fill-opacity="0.51"/><rect x="941" y="182" width="1" height="1.3" fill="#ce9178" fill-opacity="0.64"/><rect x="942" y="182" width="1" height="1.3" fill="#ce9178" fill-opacity="0.59"/><rect x="944" y="182" width="1" height="1.3" fill="#ce9178" fill-opacity="0.51"/><rect x="945" y="182" width="1" height="1.3" fill="#ce9178" fill-opacity="0.51"/><rect x="946" y="182" width="1" height="1.3" fill="#ce9178" fill-opacity="0.51"/><rect x="947" y="182" width="1" height="1.3" fill="#ce9178" fill-opacity="0.51"/><rect x="948" y="182" width="1" height="1.3" fill="#ce9178" fill-opacity="0.51"/><rect x="949" y="182" width="1" height="1.3" fill="#ce9178" fill-opacity="0.59"/><rect x="950" y="182" width="1" height="1.3" fill="#ce9178" fill-opacity="0.51"/><rect x="951" y="182" width="1" height="1.3" fill="#ce9178" fill-opacity="0.30"/><rect x="952" y="182" width="1" height="1.3" fill="#ce9178" fill-opacity="0.30"/><rect x="953" y="182" width="1" height="1.3" fill="#ce9178" fill-opacity="0.30"/><rect x="954" y="182" width="1" height="1.3" fill="#ce9178" fill-opacity="0.42"/><rect x="955" y="182" width="1" height="1.3" fill="#ce9178" fill-opacity="0.51"/><rect x="956" y="182" width="1" height="1.3" fill="#ce9178" fill-opacity="0.30"/><rect x="957" y="182" width="1" height="1.3" fill="#cccccc" fill-opacity="0.30"/><rect x="959" y="182" width="1" height="1.3" fill="#9cdcfe" fill-opacity="0.51"/><rect x="960" y="182" width="1" height="1.3" fill="#179fff" fill-opacity="0.42"/><rect x="961" y="182" width="1" height="1.3" fill="#cccccc" fill-opacity="0.30"/><rect x="919" y="184" width="1" height="1.3" fill="#dcdcaa" fill-opacity="0.51"/><rect x="920" y="184" width="1" height="1.3" fill="#dcdcaa" fill-opacity="0.64"/><rect x="921" y="184" width="1" height="1.3" fill="#dcdcaa" fill-opacity="0.51"/><rect x="922" y="184" width="1" height="1.3" fill="#dcdcaa" fill-opacity="0.51"/><rect x="923" y="184" width="1" height="1.3" fill="#dcdcaa" fill-opacity="0.59"/><rect x="924" y="184" width="1" height="1.3" fill="#dcdcaa" fill-opacity="0.64"/><rect x="925" y="184" width="1" height="1.3" fill="#dcdcaa" fill-opacity="0.51"/><rect x="926" y="184" width="1" height="1.3" fill="#dcdcaa" fill-opacity="0.59"/><rect x="927" y="184" width="1" height="1.3" fill="#dcdcaa" fill-opacity="0.51"/><rect x="928" y="184" width="1" height="1.3" fill="#dcdcaa" fill-opacity="0.51"/><rect x="929" y="184" width="1" height="1.3" fill="#179fff" fill-opacity="0.42"/><rect x="930" y="184" width="1" height="1.3" fill="#b5cea8" fill-opacity="0.64"/><rect x="931" y="184" width="1" height="1.3" fill="#b5cea8" fill-opacity="0.64"/><rect x="932" y="184" width="1" height="1.3" fill="#b5cea8" fill-opacity="0.64"/><rect x="933" y="184" width="1" height="1.3" fill="#b5cea8" fill-opacity="0.64"/><rect x="935" y="184" width="1" height="1.3" fill="#cccccc" fill-opacity="0.42"/><rect x="937" y="184" width="1" height="1.3" fill="#569cd6" fill-opacity="0.51"/><rect x="938" y="184" width="1" height="1.3" fill="#569cd6" fill-opacity="0.51"/><rect x="939" y="184" width="1" height="1.3" fill="#569cd6" fill-opacity="0.51"/><rect x="940" y="184" width="1" height="1.3" fill="#569cd6" fill-opacity="0.59"/><rect x="941" y="184" width="1" height="1.3" fill="#569cd6" fill-opacity="0.64"/><rect x="942" y="184" width="1" height="1.3" fill="#569cd6" fill-opacity="0.64"/><rect x="943" y="184" width="1" height="1.3" fill="#569cd6" fill-opacity="0.64"/><rect x="944" y="184" width="1" height="1.3" fill="#569cd6" fill-opacity="0.64"/><rect x="945" y="184" width="1" height="1.3" fill="#569cd6" fill-opacity="0.30"/><rect x="946" y="184" width="1" height="1.3" fill="#569cd6" fill-opacity="0.64"/><rect x="947" y="184" width="1" height="1.3" fill="#569cd6" fill-opacity="0.64"/><rect x="948" y="184" width="1" height="1.3" fill="#569cd6" fill-opacity="0.64"/><rect x="949" y="184" width="1" height="1.3" fill="#569cd6" fill-opacity="0.64"/><rect x="950" y="184" width="1" height="1.3" fill="#569cd6" fill-opacity="0.64"/><rect x="951" y="184" width="1" height="1.3" fill="#569cd6" fill-opacity="0.64"/><rect x="952" y="184" width="1" height="1.3" fill="#569cd6" fill-opacity="0.30"/><rect x="953" y="184" width="1" height="1.3" fill="#569cd6" fill-opacity="0.64"/><rect x="954" y="184" width="1" height="1.3" fill="#569cd6" fill-opacity="0.64"/><rect x="955" y="184" width="1" height="1.3" fill="#179fff" fill-opacity="0.42"/><rect x="956" y="184" width="1" height="1.3" fill="#cccccc" fill-opacity="0.30"/><rect x="915" y="186" width="1" height="1.3" fill="#da70d6" fill-opacity="0.42"/><rect x="915" y="188" width="1" height="1.3" fill="#dcdcaa" fill-opacity="0.51"/><rect x="916" y="188" width="1" height="1.3" fill="#dcdcaa" fill-opacity="0.51"/><rect x="917" y="188" width="1" height="1.3" fill="#dcdcaa" fill-opacity="0.51"/><rect x="918" y="188" width="1" height="1.3" fill="#dcdcaa" fill-opacity="0.51"/><rect x="919" y="188" width="1" height="1.3" fill="#dcdcaa" fill-opacity="0.59"/><rect x="920" y="188" width="1" height="1.3" fill="#dcdcaa" fill-opacity="0.59"/><rect x="921" y="188" width="1" height="1.3" fill="#da70d6" fill-opacity="0.42"/><rect x="922" y="188" width="1" height="1.3" fill="#ce9178" fill-opacity="0.30"/><rect x="923" y="188" width="1" height="1.3" fill="#ce9178" fill-opacity="0.64"/><rect x="924" y="188" width="1" height="1.3" fill="#ce9178" fill-opacity="0.51"/><rect x="925" y="188" width="1" height="1.3" fill="#ce9178" fill-opacity="0.51"/><rect x="926" y="188" width="1" height="1.3" fill="#ce9178" fill-opacity="0.59"/><rect x="927" y="188" width="1" height="1.3" fill="#ce9178" fill-opacity="0.51"/><rect x="928" y="188" width="1" height="1.3" fill="#ce9178" fill-opacity="0.51"/><rect x="929" y="188" width="1" height="1.3" fill="#ce9178" fill-opacity="0.59"/><rect x="930" y="188" width="1" height="1.3" fill="#ce9178" fill-opacity="0.51"/><rect x="931" y="188" width="1" height="1.3" fill="#ce9178" fill-opacity="0.51"/><rect x="932" y="188" width="1" height="1.3" fill="#ce9178" fill-opacity="0.51"/><rect x="934" y="188" width="1" height="1.3" fill="#ce9178" fill-opacity="0.51"/><rect x="935" y="188" width="1" height="1.3" fill="#ce9178" fill-opacity="0.51"/><rect x="936" y="188" width="1" height="1.3" fill="#ce9178" fill-opacity="0.51"/><rect x="937" y="188" width="1" height="1.3" fill="#ce9178" fill-opacity="0.30"/><rect x="938" y="188" width="1" height="1.3" fill="#ce9178" fill-opacity="0.42"/><rect x="939" y="188" width="1" height="1.3" fill="#ce9178" fill-opacity="0.51"/><rect x="940" y="188" width="1" height="1.3" fill="#ce9178" fill-opacity="0.30"/><rect x="941" y="188" width="1" height="1.3" fill="#da70d6" fill-opacity="0.42"/><rect x="942" y="188" width="1" height="1.3" fill="#cccccc" fill-opacity="0.30"/><rect x="915" y="190" width="1" height="1.3" fill="#dcdcaa" fill-opacity="0.59"/><rect x="916" y="190" width="1" height="1.3" fill="#dcdcaa" fill-opacity="0.59"/><rect x="917" y="190" width="1" height="1.3" fill="#dcdcaa" fill-opacity="0.59"/><rect x="918" y="190" width="1" height="1.3" fill="#dcdcaa" fill-opacity="0.51"/><rect x="919" y="190" width="1" height="1.3" fill="#dcdcaa" fill-opacity="0.51"/><rect x="920" y="190" width="1" height="1.3" fill="#dcdcaa" fill-opacity="0.59"/><rect x="921" y="190" width="1" height="1.3" fill="#da70d6" fill-opacity="0.42"/><rect x="922" y="190" width="1" height="1.3" fill="#9cdcfe" fill-opacity="0.51"/><rect x="923" y="190" width="1" height="1.3" fill="#9cdcfe" fill-opacity="0.59"/><rect x="924" y="190" width="1" height="1.3" fill="#9cdcfe" fill-opacity="0.59"/><rect x="925" y="190" width="1" height="1.3" fill="#9cdcfe" fill-opacity="0.51"/><rect x="926" y="190" width="1" height="1.3" fill="#9cdcfe" fill-opacity="0.51"/><rect x="927" y="190" width="1" height="1.3" fill="#9cdcfe" fill-opacity="0.59"/><rect x="928" y="190" width="1" height="1.3" fill="#da70d6" fill-opacity="0.42"/><rect x="929" y="190" width="1" height="1.3" fill="#cccccc" fill-opacity="0.30"/><rect x="915" y="192" width="1" height="1.3" fill="#dcdcaa" fill-opacity="0.51"/><rect x="916" y="192" width="1" height="1.3" fill="#dcdcaa" fill-opacity="0.51"/><rect x="917" y="192" width="1" height="1.3" fill="#dcdcaa" fill-opacity="0.51"/><rect x="918" y="192" width="1" height="1.3" fill="#dcdcaa" fill-opacity="0.30"/><rect x="919" y="192" width="1" height="1.3" fill="#dcdcaa" fill-opacity="0.51"/><rect x="920" y="192" width="1" height="1.3" fill="#dcdcaa" fill-opacity="0.51"/><rect x="921" y="192" width="1" height="1.3" fill="#dcdcaa" fill-opacity="0.51"/><rect x="922" y="192" width="1" height="1.3" fill="#dcdcaa" fill-opacity="0.59"/><rect x="923" y="192" width="1" height="1.3" fill="#dcdcaa" fill-opacity="0.51"/><rect x="924" y="192" width="1" height="1.3" fill="#dcdcaa" fill-opacity="0.51"/><rect x="925" y="192" width="1" height="1.3" fill="#dcdcaa" fill-opacity="0.59"/><rect x="926" y="192" width="1" height="1.3" fill="#da70d6" fill-opacity="0.42"/><rect x="927" y="192" width="1" height="1.3" fill="#da70d6" fill-opacity="0.42"/><rect x="928" y="192" width="1" height="1.3" fill="#cccccc" fill-opacity="0.30"/><rect x="911" y="194" width="1" height="1.3" fill="#ffd700" fill-opacity="0.42"/></svg><div class="a" style="left:986px;top:92px;width:1px;height:585px;background:#141414;"></div><div class="a" style="left:987px;top:175px;width:12px;height:3px;background:#a0a0a0;"></div><div class="a" style="left:0px;top:677px;width:999px;height:1px;background:#2b2b2b;"></div><div class="a" style="left:0px;top:678px;width:33px;height:20px;background:#0078d4;"></div><svg style="left:0px;top:676px;" width="40" height="22" viewBox="0 676 40 22"><path d="M12 685.4 L16.2 689.5 L12 693.6 M20.4 682.4 L16.4 686 L20.4 689.6" stroke="#ffffff" stroke-width="1.2" fill="none"/></svg><svg style="left:36px;top:678px;" width="24" height="20" viewBox="36 678 24 20"><path d="M41.6 682.8 L44 684.3 H52 L54.4 682.8 L54.9 688.5 A6.3 5.5 0 0 1 41.1 688.5 Z" fill="#cccccc"/><rect x="42.6" y="686.6" width="10.8" height="5.4" rx="2.7" fill="#181818"/><circle cx="45.7" cy="689.3" r="1.3" fill="#cccccc"/><circle cx="50.3" cy="689.3" r="1.3" fill="#cccccc"/></svg><div class="t" style="left:57.59px;top:682.95px;font-size:12px;color:#cccccc;font-weight:400;transform:scaleX(0.9050);transform-origin:0 0;">ESP-IDF v5.3.1</div><svg style="left:152px;top:681px;" width="9" height="13" viewBox="0 0 9 13"><path d="M2.5 0.5 V3.5 M6.5 0.5 V3.5 M1 3.5 H8 V6.5 A3.5 3.5 0 0 1 1 6.5 Z M4.5 10 V13" stroke="#cccccc" stroke-width="1.2" fill="none"/></svg><div class="t" style="left:166.38px;top:682.95px;font-size:12px;color:#cccccc;font-weight:400;letter-spacing:-0.206px;">COM12</div><svg style="left:222px;top:682px;" width="14" height="13" viewBox="0 0 14 13"><rect x="3" y="2.5" width="8" height="8" rx="1" stroke="#cccccc" stroke-width="1.2" fill="none"/><path d="M5 0.5 V2.5 M7 0.5 V2.5 M9 0.5 V2.5 M5 10.5 V12.5 M7 10.5 V12.5 M9 10.5 V12.5 M1 4.5 H3 M1 6.5 H3 M1 8.5 H3 M11 4.5 H13 M11 6.5 H13 M11 8.5 H13" stroke="#cccccc" stroke-width="1"/></svg><div class="t" style="left:239.52px;top:682.95px;font-size:12px;color:#cccccc;font-weight:400;transform:scaleX(0.9532);transform-origin:0 0;">esp32s3</div><svg style="left:298px;top:681px;" width="16" height="15" viewBox="298 681 16 15"><path d="M299.6 690.5 V683.6 H303.3 L304.4 684.7 H310 V686.3 M302.4 693.8 V687 H306 L307 688 H312.3 V693.8 Z" stroke="#cccccc" stroke-width="1.1" fill="none" stroke-linejoin="round"/><path d="M302.4 690 H312.3" stroke="#cccccc" stroke-width="1"/></svg><svg style="left:0;top:0" width="999" height="698" viewBox="0 0 999 698"><path d="M340.04 686.87 L341.96 687.07 L341.96 689.73 L340.04 689.93 L339.85 690.38 L341.07 691.88 L339.18 693.77 L337.68 692.55 L337.23 692.74 L337.03 694.66 L334.37 694.66 L334.17 692.74 L333.72 692.55 L332.22 693.77 L330.33 691.88 L331.55 690.38 L331.36 689.93 L329.44 689.73 L329.44 687.07 L331.36 686.87 L331.55 686.42 L330.33 684.92 L332.22 683.03 L333.72 684.25 L334.17 684.06 L334.37 682.14 L337.03 682.14 L337.23 684.06 L337.68 684.25 L339.18 683.03 L341.07 684.92 L339.85 686.42Z" stroke="#cccccc" stroke-width="1.1" fill="none" stroke-linejoin="round"/><circle cx="335.7" cy="688.4" r="1.7" stroke="#cccccc" stroke-width="1.1" fill="none"/></svg><svg style="left:359px;top:681px;" width="13" height="14" viewBox="359 681 13 14"><path d="M360.3 684.3 H371.2 M363.8 684.3 V682.5 H367.7 V684.3 M361.5 684.3 L362.3 693.7 H369.3 L370.1 684.3 M363.7 686.3 V691.8 M365.8 686.3 V691.8 M367.9 686.3 V691.8" stroke="#cccccc" stroke-width="1.05" fill="none"/></svg><svg style="left:388px;top:680px;" width="16" height="16" viewBox="388 680 16 16"><path d="M390.3 692.2 L396.2 686.3" stroke="#cccccc" stroke-width="3"  stroke-linecap="round"/><path d="M390.3 692.2 L396.2 686.3" stroke="#181818" stroke-width="1"  stroke-linecap="round"/><path d="M395.6 687.2 A3.6 3.6 0 1 1 401.4 684.8 L399.2 685.3 L398.6 686.5 L399.6 687.8 L401.9 687.3 A3.6 3.6 0 0 1 396.4 688" stroke="#cccccc" stroke-width="1.05" fill="#181818" stroke-linejoin="round"/></svg><svg style="left:418px;top:680px;" width="16" height="16" viewBox="418 680 16 16"><path d="M426 682.6 L427.6 686.6 L431.8 686.8 L428.6 689.5 L429.7 693.5 L426 691.2 L422.3 693.5 L423.4 689.5 L420.2 686.8 L424.4 686.6 Z" stroke="#cccccc" stroke-width="1.3" fill="none" stroke-linejoin="round"/></svg><div class="t" style="left:435.73px;top:682.95px;font-size:12px;color:#cccccc;font-weight:400;transform:scaleX(0.8765);transform-origin:0 0;">UART</div><svg style="left:483px;top:680px;" width="11" height="16" viewBox="483 680 11 16"><path d="M489.8 682 L485 688.5 H488.3 L486.6 693.4 L491.8 686.6 H488.5 L490.5 682 Z" stroke="#cccccc" stroke-width="1.05" fill="none" stroke-linejoin="round"/></svg><svg style="left:511px;top:683px;" width="14" height="12" viewBox="0 0 14 12"><rect x="0.6" y="0.6" width="12.6" height="8.8" stroke="#cccccc" stroke-width="1.2" fill="none"/><path d="M3.5 11.3 H10.3" stroke="#cccccc" stroke-width="1.2"/></svg><svg style="left:541px;top:682px;" width="15" height="14" viewBox="0 0 15 14"><path d="M4 6 V0.8 L14 6.5 L7.5 10.5" stroke="#cccccc" stroke-width="1.1" fill="none"/><ellipse cx="3.5" cy="10.3" rx="2" ry="2.5" stroke="#cccccc" stroke-width="1" fill="none"/><path d="M1.5 10 H5.5 M0.3 7.8 L1.8 8.6 M6.7 7.8 L5.2 8.6 M0.3 13 L1.8 12 M6.7 13 L5.2 12" stroke="#cccccc" stroke-width="0.9" fill="none"/></svg><div class="a" style="left:564px;top:679px;width:30px;height:18px;border:2px solid #e51c1c"></div><svg style="left:573px;top:682px;" width="11" height="13" viewBox="0 0 11 13"><path d="M5 0.8 C6.5 3 10.2 5 10.2 8.3 A4.7 4.7 0 0 1 0.8 8.3 C0.8 6.5 1.8 5.3 2.8 4.5 C2.8 6 3.3 7 4 7.3 C3.8 5 4 2.8 5 0.8 Z M5.5 12 A2.2 2.2 0 0 1 3.6 9.6 C4.6 9.2 5.3 8.2 5.8 7.5 C7 8.5 7.6 9.5 7.5 10.3 A2.2 2.2 0 0 1 5.5 12" stroke="#cccccc" stroke-width="1.1" fill="none" stroke-linejoin="round"/></svg><svg style="left:600px;top:682px;" width="15" height="14" viewBox="0 0 15 14"><rect x="0.6" y="0.6" width="13" height="12" rx="1" stroke="#cccccc" stroke-width="1.2" fill="none"/><path d="M3.5 4 L5.8 6.2 L3.5 8.4 M6.5 9.2 H10.5" stroke="#cccccc" stroke-width="1.1" fill="none"/></svg><svg style="left:631px;top:682px;" width="13" height="14" viewBox="0 0 13 14"><rect x="0.6" y="0.6" width="11.8" height="12" stroke="#cccccc" stroke-width="1.2" fill="none"/><path d="M2.8 6.6 H9 M6.3 4 L9 6.6 L6.3 9.2" stroke="#cccccc" stroke-width="1.5" fill="none"/></svg><svg style="left:661px;top:682px;" width="14" height="14" viewBox="0 0 14 14"><circle cx="6.7" cy="6.7" r="6" stroke="#cccccc" stroke-width="1.1" fill="none"/><path d="M4.2 4.2 L9.2 9.2 M9.2 4.2 L4.2 9.2" stroke="#cccccc" stroke-width="1.1"/></svg><div class="t" style="left:677.60px;top:682.95px;font-size:12px;color:#cccccc;font-weight:400;letter-spacing:0.000px;">0</div><svg style="left:688px;top:682px;" width="14" height="13" viewBox="0 0 14 13"><path d="M6.7 0.8 L13 12.3 H0.5 Z M6.7 4.5 V8.8 M6.7 9.8 V11" stroke="#cccccc" stroke-width="1.1" fill="none" stroke-linejoin="round"/></svg><div class="t" style="left:704.70px;top:682.95px;font-size:12px;color:#cccccc;font-weight:400;letter-spacing:0.000px;">0</div><svg style="left:729px;top:682px;" width="13" height="13" viewBox="0 0 13 13"><path d="M2.5 1 A6 6 0 0 0 2.5 9 M10.5 1 A6 6 0 0 1 10.5 9 M4.2 2.8 A3.5 3.5 0 0 0 4.2 7.2 M8.8 2.8 A3.5 3.5 0 0 1 8.8 7.2 M6.5 6 L3.8 12.5 M6.5 6 L9.2 12.5 M4.8 10 H8.2" stroke="#cccccc" stroke-width="1.1" fill="none"/><circle cx="6.5" cy="5" r="1.2" fill="#cccccc"/></svg><div class="t" style="left:744.50px;top:682.95px;font-size:12px;color:#cccccc;font-weight:400;letter-spacing:0.000px;">0</div><svg style="left:0;top:0" width="999" height="698" viewBox="0 0 999 698"><path d="M778.64 686.87 L780.56 687.07 L780.56 689.73 L778.64 689.93 L778.45 690.38 L779.67 691.88 L777.78 693.77 L776.28 692.55 L775.83 692.74 L775.63 694.66 L772.97 694.66 L772.77 692.74 L772.32 692.55 L770.82 693.77 L768.93 691.88 L770.15 690.38 L769.96 689.93 L768.04 689.73 L768.04 687.07 L769.96 686.87 L770.15 686.42 L768.93 684.92 L770.82 683.03 L772.32 684.25 L772.77 684.06 L772.97 682.14 L775.63 682.14 L775.83 684.06 L776.28 684.25 L777.78 683.03 L779.67 684.92 L778.45 686.42Z" stroke="#cccccc" stroke-width="1.1" fill="none" stroke-linejoin="round"/><circle cx="774.3" cy="688.4" r="1.7" stroke="#cccccc" stroke-width="1.1" fill="none"/></svg><div class="t" style="left:784.00px;top:682.95px;font-size:12px;color:#cccccc;font-weight:400;letter-spacing:0.206px;">Build</div><svg style="left:827px;top:682px;" width="14" height="13" viewBox="0 0 14 13"><ellipse cx="7" cy="7.7" rx="3.6" ry="4.2" stroke="#cccccc" stroke-width="1.1" fill="none"/><path d="M4.5 3.5 A2.5 2.5 0 0 1 9.5 3.5 M3.5 7 H10.5 M0.6 4.5 L3.3 5.8 M13.4 4.5 L10.7 5.8 M0.6 8 H3.4 M10.6 8 H13.4 M0.8 12 L3.5 10.5 M13.2 12 L10.5 10.5" stroke="#cccccc" stroke-width="1.1" fill="none"/></svg><svg style="left:859px;top:682px;" width="10" height="13" viewBox="0 0 10 13"><path d="M0.8 0.8 L9 6.5 L0.8 12.2 Z" stroke="#cccccc" stroke-width="1.1" fill="none" stroke-linejoin="round"/></svg><div class="t" style="left:913.38px;top:682.95px;font-size:12px;color:#cccccc;font-weight:400;letter-spacing:0.150px;">{ }</div><div class="t" style="left:931.88px;top:682.95px;font-size:12px;color:#cccccc;font-weight:400;letter-spacing:0.000px;">C</div><div class="t" style="left:953.11px;top:682.95px;font-size:12px;color:#cccccc;font-weight:400;transform:scaleX(0.8872);transform-origin:0 0;">ESP-IDF</div></body></html>
